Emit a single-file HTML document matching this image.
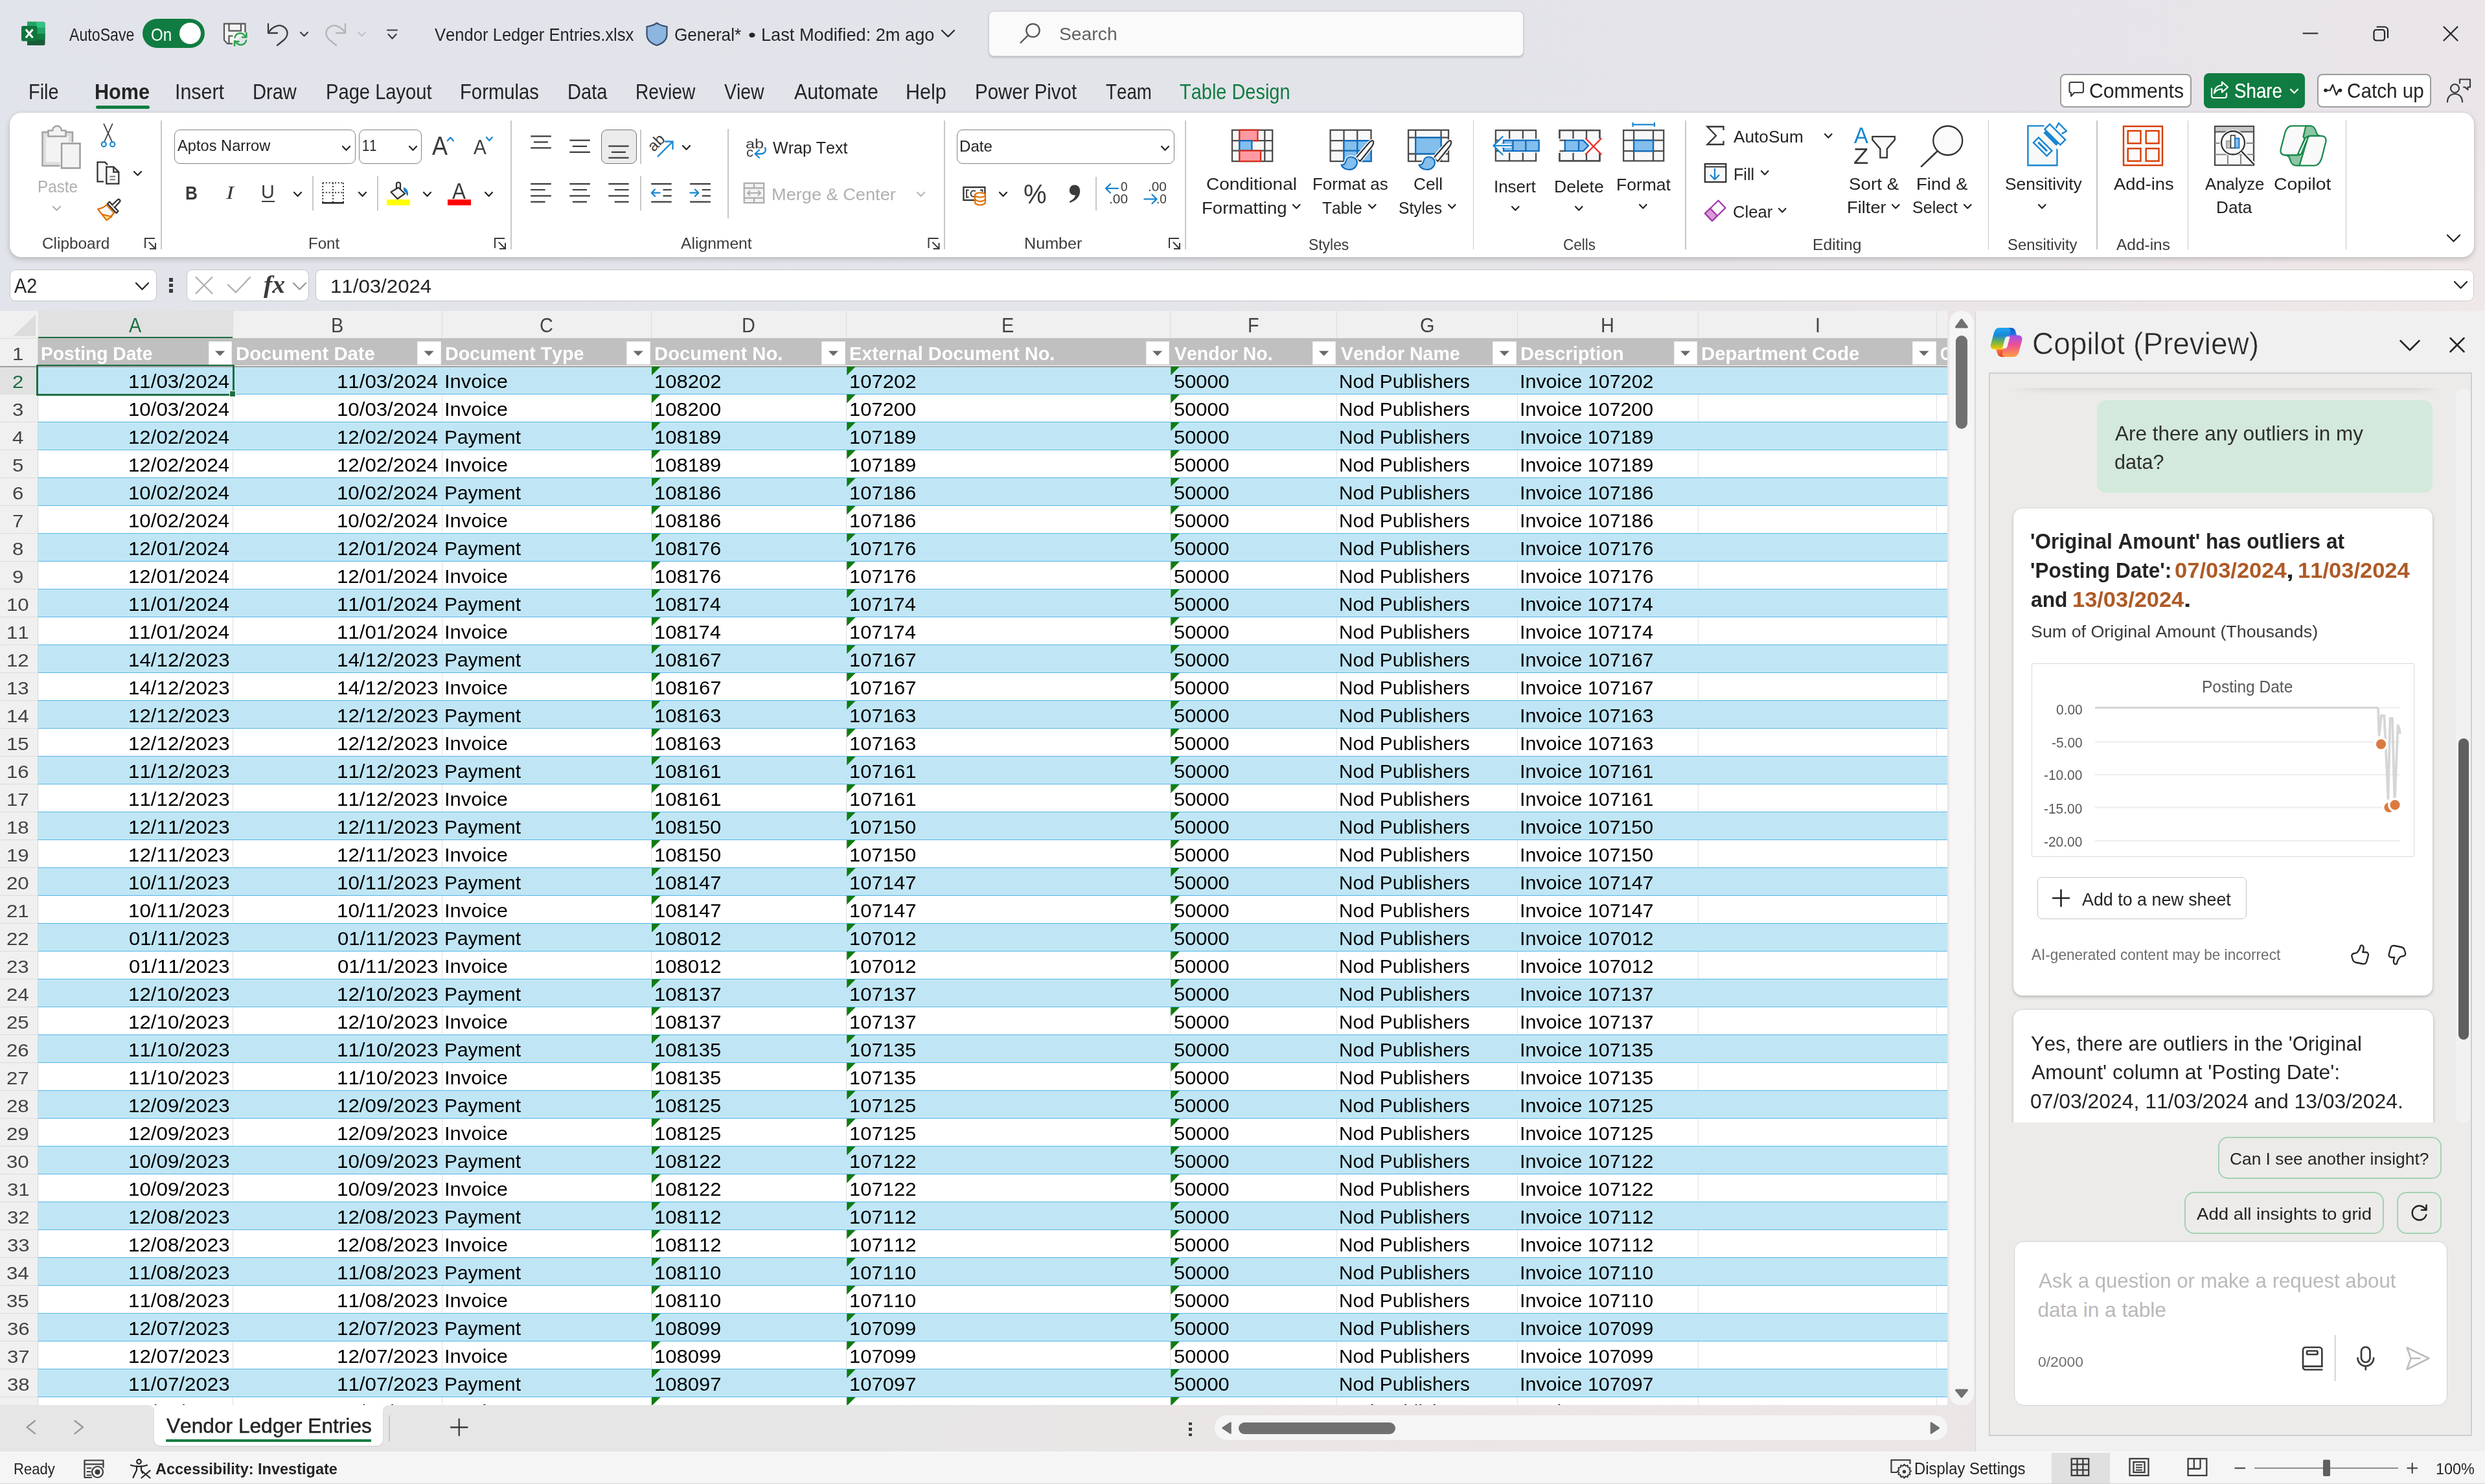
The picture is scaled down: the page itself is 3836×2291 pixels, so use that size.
<!DOCTYPE html><html><head><meta charset="utf-8"><title>Excel</title><style>
html,body{margin:0;padding:0}
body{width:3836px;height:2291px;overflow:hidden;position:relative;font-family:"Liberation Sans",sans-serif;
background:linear-gradient(90deg,#e1e4ea 0%,#e3e5ea 40%,#e8e5e9 70%,#efe8e8 100%);}
.t{position:absolute;white-space:nowrap;transform-origin:0 0;font-kerning:none;line-height:1;font-family:"Liberation Sans",sans-serif}
svg{overflow:visible}
</style></head><body>
<!-- part_top -->
<div style="position:absolute;left:0px;top:0px;width:3836px;height:300px;background:linear-gradient(180deg,rgba(0,0,0,0) 0%,rgba(0,0,0,0) 60%,rgba(0,0,0,0) 100%),linear-gradient(90deg,#e1e4ea 0%,#e2e4ea 40%,#e4e4ea 70%,#eae5e9 100%);-webkit-mask-image:linear-gradient(180deg,#000 70%,transparent);mask-image:linear-gradient(180deg,#000 70%,transparent)"></div>
<span class="t" style="left:106.54px;top:39.77px;font-size:27.20px;color:#242424;transform:scaleX(0.8518);">AutoSave</span>
<div style="position:absolute;left:220px;top:29px;width:96px;height:45px;background:#107c41;border-radius:23px"></div>
<span class="t" style="left:233.35px;top:39.77px;font-size:27.20px;color:#fff;transform:scaleX(0.8887);">On</span>
<div style="position:absolute;left:277px;top:35px;width:33px;height:33px;background:#fff;border-radius:50%"></div>
<svg style="position:absolute;left:462px;top:47.75px;" width="15" height="9.5" viewBox="0 0 15 9.5" fill="none"><path d="M2 2 L7.5 7.5 L13 2" stroke="#3b3b3b" stroke-width="2.2" stroke-linecap="round" stroke-linejoin="round"/></svg>
<svg style="position:absolute;left:551px;top:47.75px;" width="15" height="9.5" viewBox="0 0 15 9.5" fill="none"><path d="M2 2 L7.5 7.5 L13 2" stroke="#c4c4c4" stroke-width="2.2" stroke-linecap="round" stroke-linejoin="round"/></svg>
<span class="t" style="left:671.37px;top:39.80px;font-size:27.40px;color:#242424;transform:scaleX(0.9345);">Vendor Ledger Entries.xlsx</span>
<span class="t" style="left:1041.49px;top:39.80px;font-size:27.40px;color:#242424;transform:scaleX(0.9537);">General*</span>
<span class="t" style="left:1154.64px;top:39.80px;font-size:27.40px;color:#242424;transform:scaleX(1.2436);">•</span>
<span class="t" style="left:1174.76px;top:39.80px;font-size:27.40px;color:#242424;transform:scaleX(0.9921);">Last Modified: 2m ago</span>
<svg style="position:absolute;left:1452px;top:45.25px;" width="23" height="13.5" viewBox="0 0 23 13.5" fill="none"><path d="M2 2 L11.5 11.5 L21 2" stroke="#242424" stroke-width="2.2" stroke-linecap="round" stroke-linejoin="round"/></svg>
<div style="position:absolute;left:1526px;top:17px;width:826px;height:69.5px;background:#fafafa;border:1.5px solid #d2d2d6;border-radius:8px;box-sizing:border-box;box-shadow:0 1.5px 3px rgba(0,0,0,.18)"></div>
<span class="t" style="left:1635.23px;top:38.89px;font-size:28.00px;color:#616161;transform:scaleX(1.0104);">Search</span>
<span class="t" style="left:43.61px;top:126.08px;font-size:32.50px;color:#242424;transform:scaleX(0.8908);">File</span>
<span class="t" style="left:270.19px;top:126.08px;font-size:32.50px;color:#242424;transform:scaleX(0.9356);">Insert</span>
<span class="t" style="left:390.10px;top:126.08px;font-size:32.50px;color:#242424;transform:scaleX(0.8942);">Draw</span>
<span class="t" style="left:502.60px;top:126.08px;font-size:32.50px;color:#242424;transform:scaleX(0.8965);">Page Layout</span>
<span class="t" style="left:710.09px;top:126.08px;font-size:32.50px;color:#242424;transform:scaleX(0.9003);">Formulas</span>
<span class="t" style="left:876.10px;top:126.08px;font-size:32.50px;color:#242424;transform:scaleX(0.8948);">Data</span>
<span class="t" style="left:980.68px;top:126.08px;font-size:32.50px;color:#242424;transform:scaleX(0.8656);">Review</span>
<span class="t" style="left:1117.86px;top:126.08px;font-size:32.50px;color:#242424;transform:scaleX(0.8739);">View</span>
<span class="t" style="left:1225.92px;top:126.08px;font-size:32.50px;color:#242424;transform:scaleX(0.9338);">Automate</span>
<span class="t" style="left:1398.48px;top:126.08px;font-size:32.50px;color:#242424;transform:scaleX(0.9391);">Help</span>
<span class="t" style="left:1504.57px;top:126.08px;font-size:32.50px;color:#242424;transform:scaleX(0.9063);">Power Pivot</span>
<span class="t" style="left:1706.88px;top:126.08px;font-size:32.50px;color:#242424;transform:scaleX(0.8539);">Team</span>
<span class="t" style="left:145.93px;top:126.08px;font-size:32.50px;color:#242424;transform:scaleX(0.9424);font-weight:700;">Home</span>
<div style="position:absolute;left:147.5px;top:162.6px;width:83px;height:5px;background:#107c41;border-radius:3px"></div>
<span class="t" style="left:1821.35px;top:126.08px;font-size:32.50px;color:#107c41;transform:scaleX(0.8907);">Table Design</span>
<div style="position:absolute;left:3180px;top:113.5px;width:203px;height:52.5px;background:#fff;border:2px solid #9c9c9c;border-radius:8px;box-sizing:border-box"></div>
<span class="t" style="left:3224.99px;top:125.28px;font-size:30.50px;color:#242424;transform:scaleX(0.9906);">Comments</span>
<div style="position:absolute;left:3402px;top:113px;width:155.5px;height:53.5px;background:#107c41;border-radius:8px"></div>
<span class="t" style="left:3448.75px;top:125.28px;font-size:30.50px;color:#fff;transform:scaleX(0.9087);text-shadow:0 0 .6px #fff;">Share</span>
<svg style="position:absolute;left:3534px;top:135.75px;" width="15" height="9.5" viewBox="0 0 15 9.5" fill="none"><path d="M2 2 L7.5 7.5 L13 2" stroke="#fff" stroke-width="2.4" stroke-linecap="round" stroke-linejoin="round"/></svg>
<div style="position:absolute;left:3576.5px;top:113.5px;width:176.5px;height:52.5px;background:#fff;border:2px solid #9c9c9c;border-radius:8px;box-sizing:border-box"></div>
<span class="t" style="left:3622.52px;top:125.28px;font-size:30.50px;color:#242424;transform:scaleX(0.9724);">Catch up</span>
<svg style="position:absolute;left:0;top:0;pointer-events:none" width="3836" height="2291" fill="none"><g>
<path d="M42 33.700h25a2.500 2.500 0 0 1 2.500 2.500v31.300a2.500 2.500 0 0 1-2.500 2.500h-25z" fill="#185c37"/>
<path d="M42 33.700h25a2.500 2.500 0 0 1 2.500 2.500v6.700H42z" fill="#33c481"/><rect x="42" y="33.700" width="14" height="9.200" fill="#21a366"/>
<rect x="42" y="42.900" width="27.500" height="9.100" fill="#21a366"/><rect x="42" y="42.900" width="14" height="9.100" fill="#107c41"/>
<rect x="42" y="52" width="27.500" height="9.100" fill="#107c41"/><rect x="42" y="52" width="14" height="9.100" fill="#185c37"/>
<rect x="33" y="40" width="24.500" height="23.600" rx="2.500" fill="#107c41"/><rect x="33" y="40" width="24.500" height="23.600" rx="2.500" fill="#000" opacity=".05"/>
<path d="M39.800 45.500l10.800 12.800M50.600 45.500l-10.800 12.800" stroke="#fff" stroke-width="3.100"/></g>
<g stroke="#555" stroke-width="2.200" fill="#f4f4f4" stroke-linejoin="miter"><path d="M359 67.400h-8l-5-5.500V36.700h32.500V50"/><path d="M353.500 36.700v11h18.500v-11" fill="none"/><path d="M353.500 67v-11.500h6" fill="none"/></g>
<g stroke="#2ea44f" stroke-width="2.500" fill="none" stroke-linecap="round" stroke-linejoin="round"><path d="M362.500 58a8.500 8.500 0 0 1 15-3.500l2.500 3M380.500 51v6.500h-6.500"/><path d="M380 62.500a8.500 8.500 0 0 1-15 3.500l-2.500-3M362 70.500v-6.500h6.500"/></g>
<g stroke="#3b3b3b" stroke-width="2.3" fill="none" stroke-linecap="round" stroke-linejoin="round">
<path d="M414 37v14h14"/><path d="M414.500 50.500C420 41 431 36.500 438 41.500s7.500 13 1 19.500L428 70"/></g>
<g stroke="#b4b4b4" stroke-width="2.3" fill="none" stroke-linecap="round" stroke-linejoin="round">
<path d="M533 37v14h-14"/><path d="M532.500 50.500C527 41 516 36.500 509 41.500s-7.500 13-1 19.500L519 70"/></g>
<g stroke="#3b3b3b" stroke-width="2.2" stroke-linecap="round" stroke-linejoin="round" fill="none"><path d="M598 46.500h15"/><path d="M599.500 53l6 6.500l6-6.500"/></g>
<path d="M1014 35.500c5 3.500 10 5 15.500 5.500v12c0 9-6 14-15.500 17c-9.500-3-15.500-8-15.500-17V41c5.500-.5 10.500-2 15.500-5.500z" fill="#8cb6e0" stroke="#39506b" stroke-width="2.200" stroke-linejoin="round"/>
<g stroke="#555" stroke-width="2.3" fill="none" stroke-linecap="round"><circle cx="1594.500" cy="47" r="10.200"/><path d="M1587 54.500L1575.500 66"/></g>
<g stroke="#242424" stroke-width="2.200" fill="none" stroke-linecap="round" stroke-linejoin="round"><path d="M3555.500 51.500h22"/>
<rect x="3664.500" y="46" width="16.500" height="16.500" rx="3.500"/><path d="M3669.500 41.500h11.500a5 5 0 0 1 5 5V58"/>
<path d="M3772.500 41.500l21 21M3793.500 41.500l-21 21"/></g>
<path d="M3194.500 129.500a2.500 2.500 0 0 1 2.500-2.500h16.500a2.500 2.500 0 0 1 2.500 2.500v11a2.500 2.500 0 0 1-2.500 2.500h-11.500l-5 5.500v-5.500h0a2.500 2.500 0 0 1-2.500-2.500z" stroke="#3b3b3b" stroke-width="2.100" fill="none" stroke-linejoin="round"/>
<g stroke="#fff" stroke-width="2.200" fill="none" stroke-linecap="round" stroke-linejoin="round"><path d="M3414 136.500v11.500a3 3 0 0 0 3 3h17a3 3 0 0 0 3-3v-4"/><path d="M3430 126.500l9 8l-9 8v-5c-6 0-9.500 2-12 6.500c.5-7 4-12 12-12.500z"/></g>
<g stroke="#242424" stroke-width="2.200" fill="none" stroke-linecap="round" stroke-linejoin="round"><path d="M3592.500 139.500h4.500l4-8.500l5.500 15.500l3.500-7h1.500"/></g><circle cx="3590" cy="139.500" r="2.800" fill="#242424"/><circle cx="3612.500" cy="139.500" r="2.800" fill="#242424"/>
<g stroke="#3b3b3b" stroke-width="2.200" fill="none" stroke-linecap="round" stroke-linejoin="round"><circle cx="3789.500" cy="136.500" r="6.500"/><path d="M3778 157.500c0-8 5-12.500 11.500-12.500s11.500 4.500 11.500 12.500"/>
<path d="M3797 128.500v-6h16v12h-3.500v4l-4.500-4h-2"/></g></svg>
<!-- part_ribbon -->
<div style="position:absolute;left:15px;top:174px;width:3804px;height:223px;background:#fff;border-radius:18px;box-shadow:0 3px 9px rgba(0,0,0,.20),0 0 2px rgba(0,0,0,.10)"></div>
<div style="position:absolute;left:248.2px;top:185.5px;width:1.6px;height:199px;background:#c8c8c8"></div>
<div style="position:absolute;left:788.2px;top:185.5px;width:1.6px;height:199px;background:#c8c8c8"></div>
<div style="position:absolute;left:1457.2px;top:185.5px;width:1.6px;height:199px;background:#c8c8c8"></div>
<div style="position:absolute;left:1829.2px;top:185.5px;width:1.6px;height:199px;background:#c8c8c8"></div>
<div style="position:absolute;left:2273.6px;top:185.5px;width:1.6px;height:199px;background:#c8c8c8"></div>
<div style="position:absolute;left:2601.2px;top:185.5px;width:1.6px;height:199px;background:#c8c8c8"></div>
<div style="position:absolute;left:3068.7px;top:185.5px;width:1.6px;height:199px;background:#c8c8c8"></div>
<div style="position:absolute;left:3236.2px;top:185.5px;width:1.6px;height:199px;background:#c8c8c8"></div>
<div style="position:absolute;left:3376.8px;top:185.5px;width:1.6px;height:199px;background:#c8c8c8"></div>
<div style="position:absolute;left:3620.7px;top:185.5px;width:1.6px;height:199px;background:#c8c8c8"></div>
<span class="t" style="left:65.18px;top:363.91px;font-size:24.20px;color:#3b3b3b;transform:scaleX(1.0076);">Clipboard</span>
<span class="t" style="left:476.01px;top:363.91px;font-size:24.20px;color:#3b3b3b;transform:scaleX(0.9948);">Font</span>
<span class="t" style="left:1050.94px;top:363.91px;font-size:24.20px;color:#3b3b3b;transform:scaleX(1.0199);">Alignment</span>
<span class="t" style="left:1580.92px;top:363.91px;font-size:24.20px;color:#3b3b3b;transform:scaleX(1.0394);">Number</span>
<span class="t" style="left:2019.97px;top:366.01px;font-size:24.20px;color:#3b3b3b;transform:scaleX(0.9458);">Styles</span>
<span class="t" style="left:2412.88px;top:366.01px;font-size:24.20px;color:#3b3b3b;transform:scaleX(0.9278);">Cells</span>
<span class="t" style="left:2797.96px;top:366.01px;font-size:24.20px;color:#3b3b3b;transform:scaleX(1.0219);">Editing</span>
<span class="t" style="left:3098.53px;top:366.01px;font-size:24.20px;color:#3b3b3b;transform:scaleX(0.9871);">Sensitivity</span>
<span class="t" style="left:3266.54px;top:366.01px;font-size:24.20px;color:#3b3b3b;transform:scaleX(1.0105);">Add-ins</span>
<span class="t" style="left:58.00px;top:275.69px;font-size:25.40px;color:#b0b0b0;transform:scaleX(0.9555);">Paste</span>
<svg style="position:absolute;left:80.3px;top:317.05px;" width="15" height="9.5" viewBox="0 0 15 9.5" fill="none"><path d="M2 2 L7.5 7.5 L13 2" stroke="#b0b0b0" stroke-width="2.2" stroke-linecap="round" stroke-linejoin="round"/></svg>
<svg style="position:absolute;left:204.5px;top:263.05px;" width="15" height="9.5" viewBox="0 0 15 9.5" fill="none"><path d="M2 2 L7.5 7.5 L13 2" stroke="#242424" stroke-width="2.2" stroke-linecap="round" stroke-linejoin="round"/></svg>
<div style="position:absolute;left:268.5px;top:200.2px;width:280px;height:53.2px;border:1.9px solid #828282;border-radius:9px;box-sizing:border-box;background:#fff"></div>
<span class="t" style="left:273.94px;top:213.47px;font-size:24.60px;color:#242424;transform:scaleX(0.9622);">Aptos Narrow</span>
<svg style="position:absolute;left:527.3px;top:224.3px;" width="15" height="9.8" viewBox="0 0 15 9.8" fill="none"><path d="M2 2 L7.5 7.8 L13 2" stroke="#242424" stroke-width="2.2" stroke-linecap="round" stroke-linejoin="round"/></svg>
<div style="position:absolute;left:553.9px;top:200.2px;width:97.2px;height:53.2px;border:1.9px solid #828282;border-radius:9px;box-sizing:border-box;background:#fff"></div>
<span class="t" style="left:559.19px;top:213.47px;font-size:24.60px;color:#242424;transform:scaleX(0.8182);">11</span>
<svg style="position:absolute;left:630.3px;top:224.3px;" width="15" height="9.8" viewBox="0 0 15 9.8" fill="none"><path d="M2 2 L7.5 7.8 L13 2" stroke="#242424" stroke-width="2.2" stroke-linecap="round" stroke-linejoin="round"/></svg>
<span class="t" style="left:667.31px;top:204.73px;font-size:40.00px;color:#3b3b3b;transform:scaleX(0.8981);">A</span>
<span class="t" style="left:730.83px;top:212.35px;font-size:31.00px;color:#3b3b3b;transform:scaleX(0.9544);">A</span>
<span class="t" style="left:285.93px;top:282.52px;font-size:29.50px;color:#3b3b3b;transform:scaleX(0.8891);font-weight:700;">B</span>
<span class="t" style="left:348.59px;top:282.10px;font-size:30.00px;color:#3b3b3b;transform:scaleX(1.2000);font-style:italic;font-family:'Liberation Serif',serif;">I</span>
<span class="t" style="left:403.47px;top:282.25px;font-size:29.00px;color:#3b3b3b;transform:scaleX(0.9904);">U</span>
<div style="position:absolute;left:404px;top:310px;width:19.8px;height:2.2px;background:#3b3b3b"></div>
<svg style="position:absolute;left:452.1px;top:294.5px;" width="15" height="9.8" viewBox="0 0 15 9.8" fill="none"><path d="M2 2 L7.5 7.8 L13 2" stroke="#242424" stroke-width="2.2" stroke-linecap="round" stroke-linejoin="round"/></svg>
<div style="position:absolute;left:482.2px;top:272px;width:1.5px;height:53.4px;background:#c8c8c8"></div>
<div style="position:absolute;left:582.4px;top:272px;width:1.5px;height:53.4px;background:#c8c8c8"></div>
<svg style="position:absolute;left:552.4px;top:294.5px;" width="15" height="9.8" viewBox="0 0 15 9.8" fill="none"><path d="M2 2 L7.5 7.8 L13 2" stroke="#242424" stroke-width="2.2" stroke-linecap="round" stroke-linejoin="round"/></svg>
<div style="position:absolute;left:597px;top:307.9px;width:35.8px;height:9px;background:#ffff00"></div>
<svg style="position:absolute;left:652.2px;top:294.5px;" width="15" height="9.8" viewBox="0 0 15 9.8" fill="none"><path d="M2 2 L7.5 7.8 L13 2" stroke="#242424" stroke-width="2.2" stroke-linecap="round" stroke-linejoin="round"/></svg>
<span class="t" style="left:698.22px;top:276.77px;font-size:35.00px;color:#3b3b3b;transform:scaleX(0.9013);">A</span>
<div style="position:absolute;left:690.8px;top:307.9px;width:36.3px;height:9px;background:#ff0000"></div>
<svg style="position:absolute;left:746.5px;top:294.5px;" width="15" height="9.8" viewBox="0 0 15 9.8" fill="none"><path d="M2 2 L7.5 7.8 L13 2" stroke="#242424" stroke-width="2.2" stroke-linecap="round" stroke-linejoin="round"/></svg>
<div style="position:absolute;left:928.4px;top:200.2px;width:55px;height:53.2px;background:#ebebeb;border:1.9px solid #757575;border-radius:9px;box-sizing:border-box"></div>
<div style="position:absolute;left:988px;top:200.2px;width:1.5px;height:53.2px;background:#c8c8c8"></div>
<div style="position:absolute;left:988px;top:272px;width:1.5px;height:53.4px;background:#c8c8c8"></div>
<div style="position:absolute;left:1123.4px;top:198.5px;width:1.6px;height:138.5px;background:#c8c8c8"></div>
<span class="t" style="left:994.5px;top:220.5px;font-size:24px;color:#3b3b3b;transform:rotate(-45deg);transform-origin:0 0">ab</span>
<svg style="position:absolute;left:1052.2px;top:223px;" width="15" height="9.8" viewBox="0 0 15 9.8" fill="none"><path d="M2 2 L7.5 7.8 L13 2" stroke="#242424" stroke-width="2.2" stroke-linecap="round" stroke-linejoin="round"/></svg>
<span class="t" style="left:1151.43px;top:212.04px;font-size:20.50px;color:#3b3b3b;transform:scaleX(1.2329);">ab</span>
<span class="t" style="left:1152.06px;top:225.04px;font-size:20.50px;color:#3b3b3b;transform:scaleX(1.0777);">c</span>
<span class="t" style="left:1193.37px;top:216.39px;font-size:25.40px;color:#242424;transform:scaleX(0.9862);">Wrap Text</span>
<span class="t" style="left:1191.26px;top:287.79px;font-size:25.40px;color:#b0b0b0;transform:scaleX(1.0701);">Merge &amp; Center</span>
<svg style="position:absolute;left:1413.5px;top:294.5px;" width="15" height="9.8" viewBox="0 0 15 9.8" fill="none"><path d="M2 2 L7.5 7.8 L13 2" stroke="#b8b8b8" stroke-width="2.2" stroke-linecap="round" stroke-linejoin="round"/></svg>
<div style="position:absolute;left:1477.1px;top:200.3px;width:335.7px;height:53px;border:1.9px solid #828282;border-radius:9px;box-sizing:border-box;background:#fff"></div>
<span class="t" style="left:1481.21px;top:213.77px;font-size:24.60px;color:#242424;transform:scaleX(0.9803);">Date</span>
<svg style="position:absolute;left:1791.2px;top:224.3px;" width="15" height="9.8" viewBox="0 0 15 9.8" fill="none"><path d="M2 2 L7.5 7.8 L13 2" stroke="#242424" stroke-width="2.2" stroke-linecap="round" stroke-linejoin="round"/></svg>
<svg style="position:absolute;left:1541.2px;top:295px;" width="15" height="9.8" viewBox="0 0 15 9.8" fill="none"><path d="M2 2 L7.5 7.8 L13 2" stroke="#242424" stroke-width="2.2" stroke-linecap="round" stroke-linejoin="round"/></svg>
<span class="t" style="left:1580.20px;top:277.69px;font-size:43.00px;color:#3b3b3b;transform:scaleX(0.9331);">%</span>
<div style="position:absolute;left:1691.4px;top:272.6px;width:1.5px;height:52.8px;background:#c8c8c8"></div>
<span class="t" style="left:1729.94px;top:279.39px;font-size:19.50px;color:#3b3b3b;transform:scaleX(0.9773);">0</span>
<span class="t" style="left:1711.57px;top:298.49px;font-size:19.50px;color:#3b3b3b;transform:scaleX(1.0712);">.00</span>
<span class="t" style="left:1771.78px;top:279.39px;font-size:19.50px;color:#3b3b3b;transform:scaleX(1.0631);">.00</span>
<span class="t" style="left:1784.75px;top:298.49px;font-size:19.50px;color:#3b3b3b;transform:scaleX(0.9704);">.0</span>
<svg style="position:absolute;left:0;top:0;pointer-events:none" width="3836" height="2291" fill="none"><g stroke="#3b3b3b" stroke-width="2" fill="none" stroke-linecap="square"><path d="M224 382V368H238"/><path d="M230.5 374.5L240 384M240 376v8h-8"/></g>
<g stroke="#3b3b3b" stroke-width="2" fill="none" stroke-linecap="square"><path d="M764 382V368H778"/><path d="M770.5 374.5L780 384M780 376v8h-8"/></g>
<g stroke="#3b3b3b" stroke-width="2" fill="none" stroke-linecap="square"><path d="M1433.5 382V368H1447.5"/><path d="M1440.0 374.5L1449.5 384M1449.5 376v8h-8"/></g>
<g stroke="#3b3b3b" stroke-width="2" fill="none" stroke-linecap="square"><path d="M1805 382V368H1819"/><path d="M1811.5 374.5L1821 384M1821 376v8h-8"/></g>
<g><path d="M65.500 204h46.500v52H65.500z" fill="#dedede" stroke="#a3a3a3" stroke-width="2.500"/><rect x="71" y="210" width="35" height="40" fill="#f3f3f3"/>
<path d="M74.500 210.500v-9h6.500a7 7 0 0 1 14 0h6.500v9z" fill="#f3f3f3" stroke="#a3a3a3" stroke-width="2.500"/>
<rect x="92.500" y="219.500" width="33.500" height="42.500" fill="#fff"/><rect x="95" y="221.500" width="28.500" height="38" fill="#f3f3f3" stroke="#9c9c9c" stroke-width="2.500"/></g>
<g stroke="#3b3b3b" stroke-width="1.800" stroke-linecap="round"><path d="M160.400 191.500L172.500 218M173.500 191.500L161.400 218"/></g>
<g stroke="#1a86d0" stroke-width="2.200" fill="none"><circle cx="160.300" cy="222.700" r="3.600"/><circle cx="173.700" cy="222.700" r="3.600"/></g>
<g stroke="#333" stroke-width="2.300" fill="#fafafa" stroke-linejoin="miter"><path d="M160 280.300H150.500V250.400h11.500l4 4"/><path d="M164.300 257.600h11l8 8v18h-19z"/><path d="M175.300 257.600v8h8" fill="none"/></g>
<g stroke="#7a7a7a" stroke-width="2"><path d="M169.500 272.600h8.500M169.500 277.300h8.500"/></g>
<g stroke-linejoin="round"><path d="M151 322.800c6-1 10.500-3.500 13.500-6.500l11.500 12.500c-3 4-7 8-11.700 10.800z" fill="#fafafa" stroke="#e07000" stroke-width="2.300"/>
<path d="M158 331l14.500 3.500l-8 5.300z" fill="#ffe08a" stroke="#e07000" stroke-width="2"/>
<path d="M166 314.500l3-3l13.500 14.500l-3 3z" fill="#fff" stroke="#333" stroke-width="2.300"/><path d="M173 316.500l8.500-8a2.200 2.200 0 0 1 3.200 3.200l-8 8.500" fill="#fff" stroke="#333" stroke-width="2.300"/></g>
<g stroke="#1a86d0" stroke-width="2.300" fill="none" stroke-linecap="round" stroke-linejoin="round"><path d="M690.800 217.300l4.500-5l4.500 5"/><path d="M750.800 212l4.500 5l4.500-5"/></g>
<g stroke="#333" stroke-width="2" stroke-dasharray="2 2.700"><path d="M498.200 282.300h32M498.200 282.300v30M530 282.300v30M514 282.300v30M498.200 297.300h32"/></g><path d="M497.200 313.300h33.700" stroke="#222" stroke-width="2.400"/>
<g stroke="#333" stroke-width="2.200" fill="#fafafa" stroke-linejoin="round"><path d="M615 289.500l10 9.500l-11.500 8l-10-10.500z"/><path d="M612 292v-7.500a3 3 0 0 1 6 0v7.500" fill="none"/></g>
<path d="M623.500 290c4 1.500 6.500 5.500 5.500 12c-1-3.500-2.500-6-5-7.500z" fill="#1a86d0" stroke="#0f6cbd" stroke-width="1.200"/>
<path d="M819.2 210.3H850.8M823.9 219.3H845.9M819.2 228.4H850.8" stroke="#3b3b3b" stroke-width="2.200"/>
<path d="M879.3 216.7H910.9M883.8 225.8H906M879.3 234.8H910.9" stroke="#3b3b3b" stroke-width="2.200"/>
<path d="M939.3 225.6H970.6M944 234.8H965.9M939.3 243.7H970.6" stroke="#3b3b3b" stroke-width="2.200"/>
<g stroke="#1a86d0" stroke-width="2.300" fill="none" stroke-linecap="round" stroke-linejoin="round"><path d="M1015.500 241.500L1038 219M1027 218.500h11.500v11.500"/></g>
<g stroke="#1a86d0" stroke-width="2.300" fill="none" stroke-linecap="round" stroke-linejoin="round"><path d="M1181 228c2.500 6-2 9.500-6.500 9.500h-8.500M1172 231.500l-6.500 6l6.500 6"/></g>
<path d="M819.2 283.8H850.8M819.2 293H841.6M819.2 302.4H850.8M819.2 311.6H841.6" stroke="#3b3b3b" stroke-width="2.200"/>
<path d="M879.3 283.8H910.9M883.8 293H906M879.3 302.4H910.9M883.8 311.6H906" stroke="#3b3b3b" stroke-width="2.200"/>
<path d="M939.3 283.8H970.6M948.7 293H970.6M939.3 302.4H970.6M948.7 311.6H970.6" stroke="#3b3b3b" stroke-width="2.200"/>
<path d="M1005.200 283.800H1036.700M1005.200 311.600H1036.700M1023.500 293H1036.700M1023.500 302.400H1036.700" stroke="#3b3b3b" stroke-width="2.200"/><g stroke="#1a86d0" stroke-width="2.300" fill="none" stroke-linecap="round" stroke-linejoin="round"><path d="M1006 297.700h12.500M1011 292.500l-5.200 5.200l5.200 5.200"/></g>
<path d="M1065.100 283.800H1096.900M1065.100 311.600H1096.900M1083.700 293H1096.900M1083.700 302.400H1096.900" stroke="#3b3b3b" stroke-width="2.200"/><g stroke="#1a86d0" stroke-width="2.300" fill="none" stroke-linecap="round" stroke-linejoin="round"><path d="M1065.500 297.700h12.500M1073 292.500l5.200 5.200l-5.200 5.200"/></g>
<g stroke="#ababab" stroke-width="2.200" fill="#f3f3f3"><rect x="1148.700" y="282.800" width="30.500" height="30.300"/><path d="M1148.700 290.300h30.500M1148.700 305.600h30.500M1164 282.800v7.500M1164 305.600v7.500" fill="none"/></g>
<g stroke="#ababab" stroke-width="2" fill="none" stroke-linecap="round" stroke-linejoin="round"><path d="M1154 298h20M1157.500 294.500l-3.500 3.500l3.500 3.500M1170.500 294.500l3.500 3.500l-3.500 3.500"/></g>
<g stroke="#333" stroke-width="2.300" fill="#fafafa"><rect x="1487.400" y="289" width="33" height="20"/></g>
<g stroke="#333" stroke-width="1.800" fill="none"><path d="M1495.500 293.500h-3.500v11h3.500M1506 295c-5-2-7.500 1-7.500 4s2.500 6 7.500 4M1513 293.500h3.500v3"/></g>
<g stroke="#e07000" stroke-width="2.200" fill="#fafafa"><path d="M1505 301v11.500c0 2.200 3.600 4 8 4s8-1.800 8-4V301"/><ellipse cx="1513" cy="301" rx="8" ry="3.500"/><path d="M1505 306.800c0 2.200 3.600 4 8 4s8-1.800 8-4" fill="none"/></g>
<path d="M1659 285.500c5 0 8.200 3.800 8.200 9.500c0 8-5.500 14.500-15.500 18l-.8-2.200c5.500-2.500 8.500-5.500 9-9.500c-5 .5-9-2.500-9-7.500c0-4.800 3.500-8.300 8.100-8.300z" fill="#3b3b3b"/>
<g stroke="#1a86d0" stroke-width="2.300" fill="none" stroke-linecap="round" stroke-linejoin="round"><path d="M1707 290.900h19M1714 284l-7 6.900l7 6.900"/><path d="M1766.500 307.400h18.500M1778.500 300.500l7 6.900l-7 6.900"/></g></svg>
<!-- part_ribbon2 -->
<span class="t" style="left:1862.40px;top:272.39px;font-size:25.40px;color:#242424;transform:scaleX(1.1014);">Conditional</span>
<span class="t" style="left:1854.73px;top:308.69px;font-size:25.40px;color:#242424;transform:scaleX(1.0842);">Formatting</span>
<svg style="position:absolute;left:1993.75px;top:314.45px;" width="14.5" height="9.5" viewBox="0 0 14.5 9.5" fill="none"><path d="M2 2 L7.25 7.5 L12.5 2" stroke="#242424" stroke-width="2.2" stroke-linecap="round" stroke-linejoin="round"/></svg>
<span class="t" style="left:2026.36px;top:272.39px;font-size:25.40px;color:#242424;transform:scaleX(1.0212);">Format as</span>
<span class="t" style="left:2041.25px;top:308.69px;font-size:25.40px;color:#242424;transform:scaleX(0.9699);">Table</span>
<svg style="position:absolute;left:2110.75px;top:314.45px;" width="14.5" height="9.5" viewBox="0 0 14.5 9.5" fill="none"><path d="M2 2 L7.25 7.5 L12.5 2" stroke="#242424" stroke-width="2.2" stroke-linecap="round" stroke-linejoin="round"/></svg>
<span class="t" style="left:2181.59px;top:272.39px;font-size:25.40px;color:#242424;transform:scaleX(1.0323);">Cell</span>
<span class="t" style="left:2158.79px;top:308.69px;font-size:25.40px;color:#242424;transform:scaleX(0.9697);">Styles</span>
<svg style="position:absolute;left:2234.25px;top:314.45px;" width="14.5" height="9.5" viewBox="0 0 14.5 9.5" fill="none"><path d="M2 2 L7.25 7.5 L12.5 2" stroke="#242424" stroke-width="2.2" stroke-linecap="round" stroke-linejoin="round"/></svg>
<span class="t" style="left:2306.40px;top:275.59px;font-size:25.40px;color:#242424;transform:scaleX(1.0200);">Insert</span>
<svg style="position:absolute;left:2331.75px;top:316.95px;" width="14.5" height="9.5" viewBox="0 0 14.5 9.5" fill="none"><path d="M2 2 L7.25 7.5 L12.5 2" stroke="#242424" stroke-width="2.2" stroke-linecap="round" stroke-linejoin="round"/></svg>
<span class="t" style="left:2399.01px;top:275.59px;font-size:25.40px;color:#242424;transform:scaleX(1.0453);">Delete</span>
<svg style="position:absolute;left:2429.55px;top:316.95px;" width="14.5" height="9.5" viewBox="0 0 14.5 9.5" fill="none"><path d="M2 2 L7.25 7.5 L12.5 2" stroke="#242424" stroke-width="2.2" stroke-linecap="round" stroke-linejoin="round"/></svg>
<span class="t" style="left:2494.91px;top:272.59px;font-size:25.40px;color:#242424;transform:scaleX(1.0429);">Format</span>
<svg style="position:absolute;left:2528.55px;top:313.95px;" width="14.5" height="9.5" viewBox="0 0 14.5 9.5" fill="none"><path d="M2 2 L7.25 7.5 L12.5 2" stroke="#242424" stroke-width="2.2" stroke-linecap="round" stroke-linejoin="round"/></svg>
<span class="t" style="left:2676.43px;top:199.19px;font-size:25.40px;color:#242424;transform:scaleX(1.0316);">AutoSum</span>
<svg style="position:absolute;left:2814.55px;top:205.05px;" width="14.5" height="9.5" viewBox="0 0 14.5 9.5" fill="none"><path d="M2 2 L7.25 7.5 L12.5 2" stroke="#242424" stroke-width="2.2" stroke-linecap="round" stroke-linejoin="round"/></svg>
<span class="t" style="left:2675.53px;top:256.59px;font-size:25.40px;color:#242424;transform:scaleX(0.9880);">Fill</span>
<svg style="position:absolute;left:2716.65px;top:262.35px;" width="14.5" height="9.5" viewBox="0 0 14.5 9.5" fill="none"><path d="M2 2 L7.25 7.5 L12.5 2" stroke="#242424" stroke-width="2.2" stroke-linecap="round" stroke-linejoin="round"/></svg>
<span class="t" style="left:2675.22px;top:314.59px;font-size:25.40px;color:#242424;transform:scaleX(1.0096);">Clear</span>
<svg style="position:absolute;left:2743.95px;top:320.45px;" width="14.5" height="9.5" viewBox="0 0 14.5 9.5" fill="none"><path d="M2 2 L7.25 7.5 L12.5 2" stroke="#242424" stroke-width="2.2" stroke-linecap="round" stroke-linejoin="round"/></svg>
<span class="t" style="left:2862.42px;top:192.44px;font-size:35.50px;color:#1a86d0;transform:scaleX(0.9312);">A</span>
<span class="t" style="left:2861.25px;top:223.94px;font-size:35.50px;color:#3b3b3b;transform:scaleX(1.0805);">Z</span>
<span class="t" style="left:2854.25px;top:272.39px;font-size:25.40px;color:#242424;transform:scaleX(1.0945);">Sort &amp;</span>
<span class="t" style="left:2851.25px;top:308.19px;font-size:25.40px;color:#242424;transform:scaleX(1.0749);">Filter</span>
<svg style="position:absolute;left:2919.25px;top:314.05px;" width="14.5" height="9.5" viewBox="0 0 14.5 9.5" fill="none"><path d="M2 2 L7.25 7.5 L12.5 2" stroke="#242424" stroke-width="2.2" stroke-linecap="round" stroke-linejoin="round"/></svg>
<span class="t" style="left:2957.83px;top:272.39px;font-size:25.40px;color:#242424;transform:scaleX(1.0839);">Find &amp;</span>
<span class="t" style="left:2952.17px;top:308.19px;font-size:25.40px;color:#242424;transform:scaleX(0.9906);">Select</span>
<svg style="position:absolute;left:3029.65px;top:314.05px;" width="14.5" height="9.5" viewBox="0 0 14.5 9.5" fill="none"><path d="M2 2 L7.25 7.5 L12.5 2" stroke="#242424" stroke-width="2.2" stroke-linecap="round" stroke-linejoin="round"/></svg>
<span class="t" style="left:3094.71px;top:272.39px;font-size:25.40px;color:#242424;transform:scaleX(1.0386);">Sensitivity</span>
<svg style="position:absolute;left:3145.35px;top:314.05px;" width="14.5" height="9.5" viewBox="0 0 14.5 9.5" fill="none"><path d="M2 2 L7.25 7.5 L12.5 2" stroke="#242424" stroke-width="2.2" stroke-linecap="round" stroke-linejoin="round"/></svg>
<span class="t" style="left:3262.63px;top:272.39px;font-size:25.40px;color:#242424;transform:scaleX(1.0767);">Add-ins</span>
<span class="t" style="left:3403.94px;top:272.39px;font-size:25.40px;color:#242424;transform:scaleX(1.0113);">Analyze</span>
<span class="t" style="left:3420.54px;top:308.19px;font-size:25.40px;color:#242424;transform:scaleX(1.0305);">Data</span>
<span class="t" style="left:3510.48px;top:272.39px;font-size:25.40px;color:#242424;transform:scaleX(1.1199);">Copilot</span>
<svg style="position:absolute;left:3775.7px;top:360.75px;" width="23" height="13.5" viewBox="0 0 23 13.5" fill="none"><path d="M2 2 L11.5 11.5 L21 2" stroke="#242424" stroke-width="2.3" stroke-linecap="round" stroke-linejoin="round"/></svg>
<svg style="position:absolute;left:0;top:0;pointer-events:none" width="3836" height="2291" fill="none"><rect x="1902" y="200.8" width="62.2" height="48.2" fill="#f8f8f8" stroke="#4d4b49" stroke-width="2.300"/><path d="M1913.4 200.8V249M1952.3 200.8V249M1902 217.2H1964.2M1902 232.6H1964.2" stroke="#4d4b49" stroke-width="2.300"/>
<rect x="1913.400" y="200.800" width="28" height="16.400" fill="#ff9aa2" stroke="#d92c1c" stroke-width="2.300"/><rect x="1913.400" y="217.200" width="19" height="15.400" fill="#83beec" stroke="#0f6cbd" stroke-width="2.300"/><rect x="1913.400" y="232.600" width="32.700" height="16.400" fill="#ff9aa2" stroke="#d92c1c" stroke-width="2.300"/>
<rect x="2053.6" y="200.8" width="62.9" height="48.2" fill="#f8f8f8" stroke="#4d4b49" stroke-width="2.300"/><path d="M2074.5 200.8V249M2095.2 200.8V249M2053.6 217.2H2116.5M2053.6 232.6H2116.5" stroke="#4d4b49" stroke-width="2.300"/>
<rect x="2074.500" y="217.200" width="42" height="31.800" fill="#83beec" stroke="#0f6cbd" stroke-width="2.300"/><path d="M2095.200 217.200V249M2074.500 232.600H2116.500" stroke="#0f6cbd" stroke-width="2.300"/>
<path d="M2119.5 217.5c1.500 1.500 .500 5-2 9l-18 22.500l-6.500-5l19-22c3-3.500 6-5.500 7.500-4.500z" fill="#fff" stroke="#fff" stroke-width="5"/>
<path d="M2119.5 217.5c1.500 1.500 .500 5-2 9l-18 22.500l-6.500-5l19-22c3-3.500 6-5.500 7.500-4.500z" fill="#fafafa" stroke="#333" stroke-width="2.200" stroke-linejoin="round"/>
<path d="M2070.5 254.5c4 .500 6-1.500 7-5.500c1-5 5-7.500 10-6.500c5.500 1 8.500 6 7 11c-2 7-9 9.500-15 8c-4-1-7.500-3.500-9-7z" fill="#83beec" stroke="#fff" stroke-width="5"/>
<path d="M2070.5 254.5c4 .500 6-1.500 7-5.500c1-5 5-7.500 10-6.500c5.500 1 8.500 6 7 11c-2 7-9 9.500-15 8c-4-1-7.500-3.500-9-7z" fill="#83beec" stroke="#0f6cbd" stroke-width="2.200" stroke-linejoin="round"/>
<rect x="2174" y="200.8" width="62" height="48.2" fill="#f8f8f8" stroke="#4d4b49" stroke-width="2.300"/><path d="M2185.2 200.8V249M2224.5 200.8V249M2174 212.4H2236M2174 237.5H2236" stroke="#4d4b49" stroke-width="2.300"/>
<rect x="2185.200" y="212.400" width="39.300" height="25.100" fill="#83beec" stroke="#0f6cbd" stroke-width="2.300"/>
<path d="M2239.5 217.5c1.500 1.500 .500 5-2 9l-18 22.500l-6.500-5l19-22c3-3.500 6-5.500 7.500-4.500z" fill="#fff" stroke="#fff" stroke-width="5"/>
<path d="M2239.5 217.5c1.500 1.500 .500 5-2 9l-18 22.500l-6.500-5l19-22c3-3.500 6-5.500 7.500-4.500z" fill="#fafafa" stroke="#333" stroke-width="2.200" stroke-linejoin="round"/>
<path d="M2190.5 254.5c4 .500 6-1.500 7-5.500c1-5 5-7.500 10-6.500c5.500 1 8.500 6 7 11c-2 7-9 9.500-15 8c-4-1-7.500-3.500-9-7z" fill="#83beec" stroke="#fff" stroke-width="5"/>
<path d="M2190.5 254.5c4 .500 6-1.500 7-5.500c1-5 5-7.500 10-6.500c5.500 1 8.500 6 7 11c-2 7-9 9.500-15 8c-4-1-7.500-3.500-9-7z" fill="#83beec" stroke="#0f6cbd" stroke-width="2.200" stroke-linejoin="round"/>
<rect x="2308.8" y="201.1" width="62.2" height="47.3" fill="#f8f8f8" stroke="#4d4b49" stroke-width="2.300"/><path d="M2330.1 201.1V248.4M2350.8 201.1V248.4M2308.8 216.7H2371M2308.8 233.2H2371" stroke="#4d4b49" stroke-width="2.300"/>
<path d="M2319 216.700H2375.600V233.200H2319l-9-8.300z" fill="#83beec" stroke="#fff" stroke-width="5"/><path d="M2321 216.700H2375.600V233.200H2321z" fill="#83beec" stroke="#0f6cbd" stroke-width="2.300"/><path d="M2335.500 216.700V233.200M2355.300 216.700V233.200" stroke="#0f6cbd" stroke-width="2.300"/>
<path d="M2306 224.900h27" stroke="#fff" stroke-width="6"/><g stroke="#1a86d0" stroke-width="2.300" fill="none" stroke-linecap="round" stroke-linejoin="round"><path d="M2306 224.900h27M2319.500 211l-14 13.900l14 13.900"/></g>
<rect x="2407.4" y="201.1" width="62" height="47.3" fill="#f8f8f8" stroke="#4d4b49" stroke-width="2.300"/><path d="M2428.5 201.1V248.4M2449 201.1V248.4M2407.4 216.7H2469.4M2407.4 233.2H2469.4" stroke="#4d4b49" stroke-width="2.300"/>
<rect x="2400" y="214" width="80" height="22" fill="#fff"/><path d="M2415.700 216.700H2444l8 8.300l-8 8.200H2415.700z" fill="#83beec" stroke="#0f6cbd" stroke-width="2.300" stroke-linejoin="round"/><path d="M2437 216.700V233.200" stroke="#0f6cbd" stroke-width="2.300"/>
<path d="M2407.400 214V201.100h62v12.900M2407.400 236v12.400h62V236" stroke="#4d4b49" stroke-width="2.300" fill="none"/><path d="M2407.400 216.700h9M2407.400 233.200h9" stroke="#4d4b49" stroke-width="2.300"/>
<path d="M2448 214l23.500 24M2471.500 214l-23.500 24" stroke="#e8302a" stroke-width="2.500" stroke-linecap="round"/>
<rect x="2506.1" y="201.1" width="62.1" height="47.3" fill="#f8f8f8" stroke="#4d4b49" stroke-width="2.300"/><path d="M2522.1 201.1V248.4M2552 201.1V248.4M2506.1 216.7H2568.2M2506.1 233.2H2568.2" stroke="#4d4b49" stroke-width="2.300"/>
<rect x="2522.100" y="216.700" width="29.900" height="16.500" fill="#83beec" stroke="#0f6cbd" stroke-width="2.300"/><path d="M2520.500 192.400h33.500M2520.500 189v6.800M2554 189v6.800" stroke="#1a86d0" stroke-width="2.200"/>
<path d="M2660.500 201v-5.500h-25l13.500 14l-13.500 13.500h25v-5.500" stroke="#333" stroke-width="2.300" fill="none" stroke-linejoin="miter"/>
<rect x="2631.800" y="253" width="32.500" height="28" fill="#f8f8f8" stroke="#333" stroke-width="2.300"/><path d="M2631.800 257.500h32.500" stroke="#333" stroke-width="2"/><g stroke="#1a86d0" stroke-width="2.300" fill="none" stroke-linecap="round" stroke-linejoin="round"><path d="M2647 261v15.500M2640.500 270.500l6.500 6.500l6.500-6.500"/></g>
<g stroke="#a03aa8" stroke-width="2.300" stroke-linejoin="round"><path d="M2632 329.500l20.500-20l11 11.500l-20.500 20z" fill="#fafafa"/><path d="M2632 329.500l8-7.800l11 11.500l-8 7.800z" fill="#d99ad9"/></g>
<path d="M2890.400 210.800h34.500v5l-12 14v13.500h-10.500v-13.500l-12-14z" fill="#fafafa" stroke="#333" stroke-width="2.300" stroke-linejoin="miter"/>
<circle cx="3006.800" cy="217" r="22.500" fill="#fafafa" stroke="#333" stroke-width="2.300"/><path d="M2990.500 233.500L2966 257" stroke="#333" stroke-width="2.500" stroke-linecap="round"/>
<path d="M3155.500 194.400H3130.400v60.900h45.100V227" fill="#f8f8f8" stroke="#1a86d0" stroke-width="2.400"/>
<g transform="translate(3153.200 226.500) rotate(45)"><rect x="-14.600" y="-5.600" width="29.200" height="11.200" fill="#fafafa" stroke="#fff" stroke-width="5"/><rect x="-14.600" y="-5.600" width="29.200" height="11.200" fill="#fafafa" stroke="#1a86d0" stroke-width="2.400"/><rect x="-9.700" y="-1.600" width="19.400" height="3.200" fill="#1a86d0"/></g>
<path d="M3173 198.800L3177.900 190.200L3189.900 202.200L3181 207.600z" fill="#fafafa" stroke="#1a86d0" stroke-width="2.400" stroke-linejoin="miter"/>
<g transform="translate(3170.300 209.600) rotate(45)"><rect x="-17.100" y="-8.300" width="34.200" height="16.600" fill="#fff" stroke="#fff" stroke-width="5"/><rect x="-17.100" y="-8.300" width="34.200" height="11.100" fill="#fafafa" stroke="#1a86d0" stroke-width="2.400"/><rect x="-14.300" y="2.800" width="27.800" height="5.500" fill="#1a86d0"/></g>
<g stroke="#d83b01" stroke-width="2.400" fill="#fafafa"><rect x="3278" y="195" width="60" height="60.200"/><rect x="3284.700" y="202" width="19.800" height="19.300"/><rect x="3312.700" y="202" width="19.800" height="19.300"/><rect x="3284.700" y="229.300" width="19.800" height="19.300"/><rect x="3312.700" y="229.300" width="19.800" height="19.300"/></g>
<rect x="3419" y="195" width="60" height="60" fill="#f8f8f8" stroke="#4d4b49" stroke-width="2.300"/><rect x="3420.200" y="196.200" width="57.600" height="6.500" fill="#c8c8c8"/><path d="M3419 203.500h60" stroke="#4d4b49" stroke-width="2"/>
<path d="M3419 221h60M3419 238.500h60M3439 238.500V255M3459 238.500V255" stroke="#8a8886" stroke-width="2"/>
<circle cx="3447" cy="220.500" r="20.500" fill="#fff"/><circle cx="3447" cy="220.500" r="18" fill="#fafafa" stroke="#333" stroke-width="2.300"/><path d="M3460 233.500l19 19.500" stroke="#fff" stroke-width="6"/><path d="M3460 233.500l19 20" stroke="#333" stroke-width="2.500" stroke-linecap="round"/>
<rect x="3437" y="217.500" width="6.500" height="11" fill="#c8c8c8" stroke="#8a8886" stroke-width="1.400"/><rect x="3443.500" y="209" width="6.500" height="19.500" fill="#fafafa" stroke="#333" stroke-width="1.600"/><rect x="3450" y="213.500" width="6.500" height="15" fill="#83beec" stroke="#0f6cbd" stroke-width="1.600"/>
<g stroke="#1a8a4c" stroke-width="2.300" stroke-linejoin="round">
<path d="M3538 194.400H3566.500L3546.400 239.600H3528C3522 239.600 3519.500 236 3520.800 230L3526.500 208C3528.500 199.500 3532 194.400 3538 194.400Z" fill="#f9f9f9"/>
<path d="M3559.500 194.400H3566C3572 194.400 3574 198.500 3575.500 204C3576.500 208 3578.500 209.800 3582.500 209.800H3567C3562.500 209.800 3559.500 211.500 3557.800 214.500L3555.500 211Z" fill="#8cc5a3"/>
<path d="M3549.500 255.600H3544.500C3538.500 255.600 3536.500 251.500 3535 246C3534 242 3532 239.800 3528 239.600H3546.400C3550.500 239.600 3553 238 3554.500 235.500L3556 240Z" fill="#8cc5a3"/>
<path d="M3567 209.800H3583C3589 209.800 3591.500 213.500 3590.200 219.500L3584.500 242C3582.300 250.500 3578.500 255.600 3572.500 255.600H3549.500L3562.200 213.500C3563 211 3564.500 209.800 3567 209.800Z" fill="#f9f9f9"/>
<path d="M3559.200 212.300L3563 211.500L3552 238.200L3547.200 238.200Z" fill="#fff" stroke-width="2"/></g></svg>
<!-- part_grid -->
<div style="position:absolute;left:16.3px;top:417px;width:224.3px;height:46.8px;background:#fff;border-radius:8px;box-shadow:0 0 0 1px rgba(0,0,0,.13)"></div>
<span class="t" style="left:22.13px;top:425.85px;font-size:31.00px;color:#242424;transform:scaleX(0.9268);">A2</span>
<svg style="position:absolute;left:208.2px;top:435.3px;" width="23" height="13.8" viewBox="0 0 23 13.8" fill="none"><path d="M2 2 L11.5 11.8 L21 2" stroke="#242424" stroke-width="2.3" stroke-linecap="round" stroke-linejoin="round"/></svg>
<div style="position:absolute;left:261.4px;top:429.3px;width:5.6px;height:5.4px;background:#3b3b3b"></div>
<div style="position:absolute;left:261.4px;top:437.8px;width:5.6px;height:5.4px;background:#3b3b3b"></div>
<div style="position:absolute;left:261.4px;top:446.3px;width:5.6px;height:5.4px;background:#3b3b3b"></div>
<div style="position:absolute;left:288.6px;top:417px;width:187.6px;height:46.8px;background:#fff;border-radius:8px;box-shadow:0 0 0 1px rgba(0,0,0,.13)"></div>
<span class="t" style="left:406.80px;top:419.93px;font-size:38.00px;color:#3b3b3b;transform:scaleX(1.0487);font-weight:700;font-style:italic;font-family:'Liberation Serif',serif;">fx</span>
<svg style="position:absolute;left:450.6px;top:435.3px;" width="23" height="13.8" viewBox="0 0 23 13.8" fill="none"><path d="M2 2 L11.5 11.8 L21 2" stroke="#9a9a9a" stroke-width="2.3" stroke-linecap="round" stroke-linejoin="round"/></svg>
<div style="position:absolute;left:488.2px;top:417px;width:3329.5px;height:46.8px;background:#fff;border-radius:8px;box-shadow:0 0 0 1px rgba(0,0,0,.13)"></div>
<span class="t" style="left:509.66px;top:427.00px;font-size:30.00px;color:#242424;transform:scaleX(1.0405);">11/03/2024</span>
<svg style="position:absolute;left:3787px;top:432.5px;" width="23" height="13.8" viewBox="0 0 23 13.8" fill="none"><path d="M2 2 L11.5 11.8 L21 2" stroke="#242424" stroke-width="2.3" stroke-linecap="round" stroke-linejoin="round"/></svg>
<div style="position:absolute;left:0;top:0;width:3006px;height:2168.5px;overflow:hidden"><div style="position:absolute;left:0px;top:480px;width:3006px;height:1688.5px;background:#fff"></div><div style="position:absolute;left:0px;top:480px;width:3006px;height:42px;background:#f0f0f0"></div><div style="position:absolute;left:58.5px;top:480px;width:301px;height:42px;background:#e1e1e1"></div><div style="position:absolute;left:58.5px;top:520px;width:301px;height:2.6px;background:#1e6e42"></div><div style="position:absolute;left:0px;top:522px;width:58.5px;height:1647px;background:#f0f0f0"></div><div style="position:absolute;left:0px;top:565.5px;width:58.5px;height:43px;background:#e1e1e1"></div><div style="position:absolute;left:56px;top:565.5px;width:2.5px;height:43px;background:#1e6e42"></div><div style="position:absolute;left:359px;top:480px;width:1.2px;height:42px;background:#dcdcdc"></div><span class="t" style="left:199.38px;top:487.35px;font-size:31.00px;color:#1e6e42;transform:scaleX(0.9300);">A</span><div style="position:absolute;left:681.5px;top:480px;width:1.2px;height:42px;background:#dcdcdc"></div><span class="t" style="left:510.70px;top:487.35px;font-size:31.00px;color:#444;transform:scaleX(0.9300);">B</span><div style="position:absolute;left:1004.5px;top:480px;width:1.2px;height:42px;background:#dcdcdc"></div><span class="t" style="left:832.94px;top:487.35px;font-size:31.00px;color:#444;transform:scaleX(0.9300);">C</span><div style="position:absolute;left:1305.8px;top:480px;width:1.2px;height:42px;background:#dcdcdc"></div><span class="t" style="left:1144.73px;top:487.35px;font-size:31.00px;color:#444;transform:scaleX(0.9300);">D</span><div style="position:absolute;left:1806px;top:480px;width:1.2px;height:42px;background:#dcdcdc"></div><span class="t" style="left:1546.20px;top:487.35px;font-size:31.00px;color:#444;transform:scaleX(0.9300);">E</span><div style="position:absolute;left:2063px;top:480px;width:1.2px;height:42px;background:#dcdcdc"></div><span class="t" style="left:1925.59px;top:487.35px;font-size:31.00px;color:#444;transform:scaleX(0.9300);">F</span><div style="position:absolute;left:2341.7px;top:480px;width:1.2px;height:42px;background:#dcdcdc"></div><span class="t" style="left:2192.00px;top:487.35px;font-size:31.00px;color:#444;transform:scaleX(0.9300);">G</span><div style="position:absolute;left:2621px;top:480px;width:1.2px;height:42px;background:#dcdcdc"></div><span class="t" style="left:2471.44px;top:487.35px;font-size:31.00px;color:#444;transform:scaleX(0.9300);">H</span><div style="position:absolute;left:2989.3px;top:480px;width:1.2px;height:42px;background:#dcdcdc"></div><span class="t" style="left:2801.65px;top:487.35px;font-size:31.00px;color:#444;transform:scaleX(0.9300);">I</span><div style="position:absolute;left:58.5px;top:522.4px;width:2947.5px;height:41.6px;background:#c0c0c0"></div><span class="t" style="left:63.20px;top:530.84px;font-size:29.60px;color:#fff;transform:scaleX(0.9532);font-weight:700;">Posting Date</span><div style="position:absolute;left:321.5px;top:526.5px;width:36.9px;height:36.7px;background:#fff;border:1px solid #ededed;box-sizing:border-box"></div><span class="t" style="left:364.12px;top:530.84px;font-size:29.60px;color:#fff;transform:scaleX(0.9901);font-weight:700;">Document Date</span><div style="position:absolute;left:644px;top:526.5px;width:36.9px;height:36.7px;background:#fff;border:1px solid #ededed;box-sizing:border-box"></div><span class="t" style="left:686.67px;top:530.84px;font-size:29.60px;color:#fff;transform:scaleX(0.9656);font-weight:700;">Document Type</span><div style="position:absolute;left:967px;top:526.5px;width:36.9px;height:36.7px;background:#fff;border:1px solid #ededed;box-sizing:border-box"></div><span class="t" style="left:1009.62px;top:530.84px;font-size:29.60px;color:#fff;transform:scaleX(0.9892);font-weight:700;">Document No.</span><div style="position:absolute;left:1268.3px;top:526.5px;width:36.9px;height:36.7px;background:#fff;border:1px solid #ededed;box-sizing:border-box"></div><span class="t" style="left:1310.95px;top:530.84px;font-size:29.60px;color:#fff;transform:scaleX(0.9746);font-weight:700;">External Document No.</span><div style="position:absolute;left:1768.5px;top:526.5px;width:36.9px;height:36.7px;background:#fff;border:1px solid #ededed;box-sizing:border-box"></div><span class="t" style="left:1812.89px;top:530.84px;font-size:29.60px;color:#fff;transform:scaleX(0.9605);font-weight:700;">Vendor No.</span><div style="position:absolute;left:2025.5px;top:526.5px;width:36.9px;height:36.7px;background:#fff;border:1px solid #ededed;box-sizing:border-box"></div><span class="t" style="left:2069.89px;top:530.84px;font-size:29.60px;color:#fff;transform:scaleX(0.9626);font-weight:700;">Vendor Name</span><div style="position:absolute;left:2304.2px;top:526.5px;width:36.9px;height:36.7px;background:#fff;border:1px solid #ededed;box-sizing:border-box"></div><span class="t" style="left:2346.84px;top:530.84px;font-size:29.60px;color:#fff;transform:scaleX(0.9809);font-weight:700;">Description</span><div style="position:absolute;left:2583.5px;top:526.5px;width:36.9px;height:36.7px;background:#fff;border:1px solid #ededed;box-sizing:border-box"></div><span class="t" style="left:2626.12px;top:530.84px;font-size:29.60px;color:#fff;transform:scaleX(0.9909);font-weight:700;">Department Code</span><div style="position:absolute;left:2951.8px;top:526.5px;width:36.9px;height:36.7px;background:#fff;border:1px solid #ededed;box-sizing:border-box"></div><span class="t" style="left:2995.02px;top:530.84px;font-size:29.60px;color:#fff;transform:scaleX(0.8253);font-weight:700;">C</span><div style="position:absolute;left:58.5px;top:565.5px;width:2947.5px;height:43px;background:#c0e6f5"></div><div style="position:absolute;left:58.5px;top:607.8px;width:2947.5px;height:1.4px;background:#56b6e6"></div><div style="position:absolute;left:0px;top:607.5px;width:58.5px;height:1.2px;background:#dcdcdc"></div><span class="t" style="left:19.13px;top:574.95px;font-size:28.40px;color:#1e6e42;transform:scaleX(1.1000);">2</span><span class="t" style="left:197.86px;top:574.78px;font-size:28.60px;color:#000;transform:scaleX(1.0915);">11/03/2024</span><span class="t" style="left:520.36px;top:574.78px;font-size:28.60px;color:#000;transform:scaleX(1.0915);">11/03/2024</span><span class="t" style="left:685.54px;top:574.78px;font-size:28.60px;color:#000;transform:scaleX(1.0816);">Invoice</span><span class="t" style="left:1010.07px;top:574.78px;font-size:28.60px;color:#000;transform:scaleX(1.0846);">108202</span><span class="t" style="left:1311.27px;top:574.78px;font-size:28.60px;color:#000;transform:scaleX(1.0846);">107202</span><span class="t" style="left:1812.27px;top:574.78px;font-size:28.60px;color:#000;transform:scaleX(1.0779);">50000</span><span class="t" style="left:2067.05px;top:574.78px;font-size:28.60px;color:#000;transform:scaleX(1.0405);">Nod Publishers</span><span class="t" style="left:2345.58px;top:574.78px;font-size:28.60px;color:#000;transform:scaleX(1.0648);">Invoice 107202</span><div style="position:absolute;left:58.5px;top:650.8px;width:2947.5px;height:1.4px;background:#56b6e6"></div><div style="position:absolute;left:0px;top:650.5px;width:58.5px;height:1.2px;background:#dcdcdc"></div><span class="t" style="left:19.21px;top:617.95px;font-size:28.40px;color:#444;transform:scaleX(1.1000);">3</span><span class="t" style="left:197.86px;top:617.78px;font-size:28.60px;color:#000;transform:scaleX(1.0915);">10/03/2024</span><span class="t" style="left:520.36px;top:617.78px;font-size:28.60px;color:#000;transform:scaleX(1.0915);">10/03/2024</span><span class="t" style="left:685.54px;top:617.78px;font-size:28.60px;color:#000;transform:scaleX(1.0816);">Invoice</span><span class="t" style="left:1010.08px;top:617.78px;font-size:28.60px;color:#000;transform:scaleX(1.0804);">108200</span><span class="t" style="left:1311.28px;top:617.78px;font-size:28.60px;color:#000;transform:scaleX(1.0804);">107200</span><span class="t" style="left:1812.27px;top:617.78px;font-size:28.60px;color:#000;transform:scaleX(1.0779);">50000</span><span class="t" style="left:2067.05px;top:617.78px;font-size:28.60px;color:#000;transform:scaleX(1.0405);">Nod Publishers</span><span class="t" style="left:2345.59px;top:617.78px;font-size:28.60px;color:#000;transform:scaleX(1.0628);">Invoice 107200</span><div style="position:absolute;left:58.5px;top:651.5px;width:2947.5px;height:43px;background:#c0e6f5"></div><div style="position:absolute;left:58.5px;top:693.8px;width:2947.5px;height:1.4px;background:#56b6e6"></div><div style="position:absolute;left:0px;top:693.5px;width:58.5px;height:1.2px;background:#dcdcdc"></div><span class="t" style="left:19.21px;top:660.95px;font-size:28.40px;color:#444;transform:scaleX(1.1000);">4</span><span class="t" style="left:197.86px;top:660.78px;font-size:28.60px;color:#000;transform:scaleX(1.0915);">12/02/2024</span><span class="t" style="left:520.36px;top:660.78px;font-size:28.60px;color:#000;transform:scaleX(1.0915);">12/02/2024</span><span class="t" style="left:685.93px;top:660.78px;font-size:28.60px;color:#000;transform:scaleX(1.0455);">Payment</span><span class="t" style="left:1010.08px;top:660.78px;font-size:28.60px;color:#000;transform:scaleX(1.0829);">108189</span><span class="t" style="left:1311.28px;top:660.78px;font-size:28.60px;color:#000;transform:scaleX(1.0829);">107189</span><span class="t" style="left:1812.27px;top:660.78px;font-size:28.60px;color:#000;transform:scaleX(1.0779);">50000</span><span class="t" style="left:2067.05px;top:660.78px;font-size:28.60px;color:#000;transform:scaleX(1.0405);">Nod Publishers</span><span class="t" style="left:2345.59px;top:660.78px;font-size:28.60px;color:#000;transform:scaleX(1.0640);">Invoice 107189</span><div style="position:absolute;left:58.5px;top:736.8px;width:2947.5px;height:1.4px;background:#56b6e6"></div><div style="position:absolute;left:0px;top:736.5px;width:58.5px;height:1.2px;background:#dcdcdc"></div><span class="t" style="left:19.13px;top:703.95px;font-size:28.40px;color:#444;transform:scaleX(1.1000);">5</span><span class="t" style="left:197.86px;top:703.78px;font-size:28.60px;color:#000;transform:scaleX(1.0915);">12/02/2024</span><span class="t" style="left:520.36px;top:703.78px;font-size:28.60px;color:#000;transform:scaleX(1.0915);">12/02/2024</span><span class="t" style="left:685.54px;top:703.78px;font-size:28.60px;color:#000;transform:scaleX(1.0816);">Invoice</span><span class="t" style="left:1010.08px;top:703.78px;font-size:28.60px;color:#000;transform:scaleX(1.0829);">108189</span><span class="t" style="left:1311.28px;top:703.78px;font-size:28.60px;color:#000;transform:scaleX(1.0829);">107189</span><span class="t" style="left:1812.27px;top:703.78px;font-size:28.60px;color:#000;transform:scaleX(1.0779);">50000</span><span class="t" style="left:2067.05px;top:703.78px;font-size:28.60px;color:#000;transform:scaleX(1.0405);">Nod Publishers</span><span class="t" style="left:2345.59px;top:703.78px;font-size:28.60px;color:#000;transform:scaleX(1.0640);">Invoice 107189</span><div style="position:absolute;left:58.5px;top:737.5px;width:2947.5px;height:43px;background:#c0e6f5"></div><div style="position:absolute;left:58.5px;top:779.8px;width:2947.5px;height:1.4px;background:#56b6e6"></div><div style="position:absolute;left:0px;top:779.5px;width:58.5px;height:1.2px;background:#dcdcdc"></div><span class="t" style="left:19.01px;top:746.95px;font-size:28.40px;color:#444;transform:scaleX(1.1000);">6</span><span class="t" style="left:197.86px;top:746.78px;font-size:28.60px;color:#000;transform:scaleX(1.0915);">10/02/2024</span><span class="t" style="left:520.36px;top:746.78px;font-size:28.60px;color:#000;transform:scaleX(1.0915);">10/02/2024</span><span class="t" style="left:685.93px;top:746.78px;font-size:28.60px;color:#000;transform:scaleX(1.0455);">Payment</span><span class="t" style="left:1010.08px;top:746.78px;font-size:28.60px;color:#000;transform:scaleX(1.0821);">108186</span><span class="t" style="left:1311.28px;top:746.78px;font-size:28.60px;color:#000;transform:scaleX(1.0821);">107186</span><span class="t" style="left:1812.27px;top:746.78px;font-size:28.60px;color:#000;transform:scaleX(1.0779);">50000</span><span class="t" style="left:2067.05px;top:746.78px;font-size:28.60px;color:#000;transform:scaleX(1.0405);">Nod Publishers</span><span class="t" style="left:2345.59px;top:746.78px;font-size:28.60px;color:#000;transform:scaleX(1.0636);">Invoice 107186</span><div style="position:absolute;left:58.5px;top:822.8px;width:2947.5px;height:1.4px;background:#56b6e6"></div><div style="position:absolute;left:0px;top:822.5px;width:58.5px;height:1.2px;background:#dcdcdc"></div><span class="t" style="left:19.09px;top:789.95px;font-size:28.40px;color:#444;transform:scaleX(1.1000);">7</span><span class="t" style="left:197.86px;top:789.78px;font-size:28.60px;color:#000;transform:scaleX(1.0915);">10/02/2024</span><span class="t" style="left:520.36px;top:789.78px;font-size:28.60px;color:#000;transform:scaleX(1.0915);">10/02/2024</span><span class="t" style="left:685.54px;top:789.78px;font-size:28.60px;color:#000;transform:scaleX(1.0816);">Invoice</span><span class="t" style="left:1010.08px;top:789.78px;font-size:28.60px;color:#000;transform:scaleX(1.0821);">108186</span><span class="t" style="left:1311.28px;top:789.78px;font-size:28.60px;color:#000;transform:scaleX(1.0821);">107186</span><span class="t" style="left:1812.27px;top:789.78px;font-size:28.60px;color:#000;transform:scaleX(1.0779);">50000</span><span class="t" style="left:2067.05px;top:789.78px;font-size:28.60px;color:#000;transform:scaleX(1.0405);">Nod Publishers</span><span class="t" style="left:2345.59px;top:789.78px;font-size:28.60px;color:#000;transform:scaleX(1.0636);">Invoice 107186</span><div style="position:absolute;left:58.5px;top:823.5px;width:2947.5px;height:43px;background:#c0e6f5"></div><div style="position:absolute;left:58.5px;top:865.8px;width:2947.5px;height:1.4px;background:#56b6e6"></div><div style="position:absolute;left:0px;top:865.5px;width:58.5px;height:1.2px;background:#dcdcdc"></div><span class="t" style="left:19.13px;top:832.95px;font-size:28.40px;color:#444;transform:scaleX(1.1000);">8</span><span class="t" style="left:197.86px;top:832.78px;font-size:28.60px;color:#000;transform:scaleX(1.0915);">12/01/2024</span><span class="t" style="left:520.36px;top:832.78px;font-size:28.60px;color:#000;transform:scaleX(1.0915);">12/01/2024</span><span class="t" style="left:685.93px;top:832.78px;font-size:28.60px;color:#000;transform:scaleX(1.0455);">Payment</span><span class="t" style="left:1010.08px;top:832.78px;font-size:28.60px;color:#000;transform:scaleX(1.0821);">108176</span><span class="t" style="left:1311.28px;top:832.78px;font-size:28.60px;color:#000;transform:scaleX(1.0821);">107176</span><span class="t" style="left:1812.27px;top:832.78px;font-size:28.60px;color:#000;transform:scaleX(1.0779);">50000</span><span class="t" style="left:2067.05px;top:832.78px;font-size:28.60px;color:#000;transform:scaleX(1.0405);">Nod Publishers</span><span class="t" style="left:2345.59px;top:832.78px;font-size:28.60px;color:#000;transform:scaleX(1.0636);">Invoice 107176</span><div style="position:absolute;left:58.5px;top:908.8px;width:2947.5px;height:1.4px;background:#56b6e6"></div><div style="position:absolute;left:0px;top:908.5px;width:58.5px;height:1.2px;background:#dcdcdc"></div><span class="t" style="left:19.09px;top:875.95px;font-size:28.40px;color:#444;transform:scaleX(1.1000);">9</span><span class="t" style="left:197.86px;top:875.78px;font-size:28.60px;color:#000;transform:scaleX(1.0915);">12/01/2024</span><span class="t" style="left:520.36px;top:875.78px;font-size:28.60px;color:#000;transform:scaleX(1.0915);">12/01/2024</span><span class="t" style="left:685.54px;top:875.78px;font-size:28.60px;color:#000;transform:scaleX(1.0816);">Invoice</span><span class="t" style="left:1010.08px;top:875.78px;font-size:28.60px;color:#000;transform:scaleX(1.0821);">108176</span><span class="t" style="left:1311.28px;top:875.78px;font-size:28.60px;color:#000;transform:scaleX(1.0821);">107176</span><span class="t" style="left:1812.27px;top:875.78px;font-size:28.60px;color:#000;transform:scaleX(1.0779);">50000</span><span class="t" style="left:2067.05px;top:875.78px;font-size:28.60px;color:#000;transform:scaleX(1.0405);">Nod Publishers</span><span class="t" style="left:2345.59px;top:875.78px;font-size:28.60px;color:#000;transform:scaleX(1.0636);">Invoice 107176</span><div style="position:absolute;left:58.5px;top:909.5px;width:2947.5px;height:43px;background:#c0e6f5"></div><div style="position:absolute;left:58.5px;top:951.8px;width:2947.5px;height:1.4px;background:#56b6e6"></div><div style="position:absolute;left:0px;top:951.5px;width:58.5px;height:1.2px;background:#dcdcdc"></div><span class="t" style="left:9.86px;top:918.95px;font-size:28.40px;color:#444;transform:scaleX(1.1000);">10</span><span class="t" style="left:197.86px;top:918.78px;font-size:28.60px;color:#000;transform:scaleX(1.0915);">11/01/2024</span><span class="t" style="left:520.36px;top:918.78px;font-size:28.60px;color:#000;transform:scaleX(1.0915);">11/01/2024</span><span class="t" style="left:685.93px;top:918.78px;font-size:28.60px;color:#000;transform:scaleX(1.0455);">Payment</span><span class="t" style="left:1010.09px;top:918.78px;font-size:28.60px;color:#000;transform:scaleX(1.0771);">108174</span><span class="t" style="left:1311.29px;top:918.78px;font-size:28.60px;color:#000;transform:scaleX(1.0771);">107174</span><span class="t" style="left:1812.27px;top:918.78px;font-size:28.60px;color:#000;transform:scaleX(1.0779);">50000</span><span class="t" style="left:2067.05px;top:918.78px;font-size:28.60px;color:#000;transform:scaleX(1.0405);">Nod Publishers</span><span class="t" style="left:2345.59px;top:918.78px;font-size:28.60px;color:#000;transform:scaleX(1.0612);">Invoice 107174</span><div style="position:absolute;left:58.5px;top:994.8px;width:2947.5px;height:1.4px;background:#56b6e6"></div><div style="position:absolute;left:0px;top:994.5px;width:58.5px;height:1.2px;background:#dcdcdc"></div><span class="t" style="left:10.01px;top:961.95px;font-size:28.40px;color:#444;transform:scaleX(1.1000);">11</span><span class="t" style="left:197.86px;top:961.78px;font-size:28.60px;color:#000;transform:scaleX(1.0915);">11/01/2024</span><span class="t" style="left:520.36px;top:961.78px;font-size:28.60px;color:#000;transform:scaleX(1.0915);">11/01/2024</span><span class="t" style="left:685.54px;top:961.78px;font-size:28.60px;color:#000;transform:scaleX(1.0816);">Invoice</span><span class="t" style="left:1010.09px;top:961.78px;font-size:28.60px;color:#000;transform:scaleX(1.0771);">108174</span><span class="t" style="left:1311.29px;top:961.78px;font-size:28.60px;color:#000;transform:scaleX(1.0771);">107174</span><span class="t" style="left:1812.27px;top:961.78px;font-size:28.60px;color:#000;transform:scaleX(1.0779);">50000</span><span class="t" style="left:2067.05px;top:961.78px;font-size:28.60px;color:#000;transform:scaleX(1.0405);">Nod Publishers</span><span class="t" style="left:2345.59px;top:961.78px;font-size:28.60px;color:#000;transform:scaleX(1.0612);">Invoice 107174</span><div style="position:absolute;left:58.5px;top:995.5px;width:2947.5px;height:43px;background:#c0e6f5"></div><div style="position:absolute;left:58.5px;top:1037.8px;width:2947.5px;height:1.4px;background:#56b6e6"></div><div style="position:absolute;left:0px;top:1037.5px;width:58.5px;height:1.2px;background:#dcdcdc"></div><span class="t" style="left:10.05px;top:1004.95px;font-size:28.40px;color:#444;transform:scaleX(1.1000);">12</span><span class="t" style="left:197.85px;top:1004.78px;font-size:28.60px;color:#000;transform:scaleX(1.0948);">14/12/2023</span><span class="t" style="left:520.35px;top:1004.78px;font-size:28.60px;color:#000;transform:scaleX(1.0948);">14/12/2023</span><span class="t" style="left:685.93px;top:1004.78px;font-size:28.60px;color:#000;transform:scaleX(1.0455);">Payment</span><span class="t" style="left:1010.07px;top:1004.78px;font-size:28.60px;color:#000;transform:scaleX(1.0846);">108167</span><span class="t" style="left:1311.27px;top:1004.78px;font-size:28.60px;color:#000;transform:scaleX(1.0846);">107167</span><span class="t" style="left:1812.27px;top:1004.78px;font-size:28.60px;color:#000;transform:scaleX(1.0779);">50000</span><span class="t" style="left:2067.05px;top:1004.78px;font-size:28.60px;color:#000;transform:scaleX(1.0405);">Nod Publishers</span><span class="t" style="left:2345.58px;top:1004.78px;font-size:28.60px;color:#000;transform:scaleX(1.0648);">Invoice 107167</span><div style="position:absolute;left:58.5px;top:1080.8px;width:2947.5px;height:1.4px;background:#56b6e6"></div><div style="position:absolute;left:0px;top:1080.5px;width:58.5px;height:1.2px;background:#dcdcdc"></div><span class="t" style="left:9.94px;top:1047.95px;font-size:28.40px;color:#444;transform:scaleX(1.1000);">13</span><span class="t" style="left:197.85px;top:1047.78px;font-size:28.60px;color:#000;transform:scaleX(1.0948);">14/12/2023</span><span class="t" style="left:520.35px;top:1047.78px;font-size:28.60px;color:#000;transform:scaleX(1.0948);">14/12/2023</span><span class="t" style="left:685.54px;top:1047.78px;font-size:28.60px;color:#000;transform:scaleX(1.0816);">Invoice</span><span class="t" style="left:1010.07px;top:1047.78px;font-size:28.60px;color:#000;transform:scaleX(1.0846);">108167</span><span class="t" style="left:1311.27px;top:1047.78px;font-size:28.60px;color:#000;transform:scaleX(1.0846);">107167</span><span class="t" style="left:1812.27px;top:1047.78px;font-size:28.60px;color:#000;transform:scaleX(1.0779);">50000</span><span class="t" style="left:2067.05px;top:1047.78px;font-size:28.60px;color:#000;transform:scaleX(1.0405);">Nod Publishers</span><span class="t" style="left:2345.58px;top:1047.78px;font-size:28.60px;color:#000;transform:scaleX(1.0648);">Invoice 107167</span><div style="position:absolute;left:58.5px;top:1081.5px;width:2947.5px;height:43px;background:#c0e6f5"></div><div style="position:absolute;left:58.5px;top:1123.8px;width:2947.5px;height:1.4px;background:#56b6e6"></div><div style="position:absolute;left:0px;top:1123.5px;width:58.5px;height:1.2px;background:#dcdcdc"></div><span class="t" style="left:9.70px;top:1090.95px;font-size:28.40px;color:#444;transform:scaleX(1.1000);">14</span><span class="t" style="left:197.85px;top:1090.78px;font-size:28.60px;color:#000;transform:scaleX(1.0948);">12/12/2023</span><span class="t" style="left:520.35px;top:1090.78px;font-size:28.60px;color:#000;transform:scaleX(1.0948);">12/12/2023</span><span class="t" style="left:685.93px;top:1090.78px;font-size:28.60px;color:#000;transform:scaleX(1.0455);">Payment</span><span class="t" style="left:1010.08px;top:1090.78px;font-size:28.60px;color:#000;transform:scaleX(1.0821);">108163</span><span class="t" style="left:1311.28px;top:1090.78px;font-size:28.60px;color:#000;transform:scaleX(1.0821);">107163</span><span class="t" style="left:1812.27px;top:1090.78px;font-size:28.60px;color:#000;transform:scaleX(1.0779);">50000</span><span class="t" style="left:2067.05px;top:1090.78px;font-size:28.60px;color:#000;transform:scaleX(1.0405);">Nod Publishers</span><span class="t" style="left:2345.59px;top:1090.78px;font-size:28.60px;color:#000;transform:scaleX(1.0636);">Invoice 107163</span><div style="position:absolute;left:58.5px;top:1166.8px;width:2947.5px;height:1.4px;background:#56b6e6"></div><div style="position:absolute;left:0px;top:1166.5px;width:58.5px;height:1.2px;background:#dcdcdc"></div><span class="t" style="left:9.90px;top:1133.95px;font-size:28.40px;color:#444;transform:scaleX(1.1000);">15</span><span class="t" style="left:197.85px;top:1133.78px;font-size:28.60px;color:#000;transform:scaleX(1.0948);">12/12/2023</span><span class="t" style="left:520.35px;top:1133.78px;font-size:28.60px;color:#000;transform:scaleX(1.0948);">12/12/2023</span><span class="t" style="left:685.54px;top:1133.78px;font-size:28.60px;color:#000;transform:scaleX(1.0816);">Invoice</span><span class="t" style="left:1010.08px;top:1133.78px;font-size:28.60px;color:#000;transform:scaleX(1.0821);">108163</span><span class="t" style="left:1311.28px;top:1133.78px;font-size:28.60px;color:#000;transform:scaleX(1.0821);">107163</span><span class="t" style="left:1812.27px;top:1133.78px;font-size:28.60px;color:#000;transform:scaleX(1.0779);">50000</span><span class="t" style="left:2067.05px;top:1133.78px;font-size:28.60px;color:#000;transform:scaleX(1.0405);">Nod Publishers</span><span class="t" style="left:2345.59px;top:1133.78px;font-size:28.60px;color:#000;transform:scaleX(1.0636);">Invoice 107163</span><div style="position:absolute;left:58.5px;top:1167.5px;width:2947.5px;height:43px;background:#c0e6f5"></div><div style="position:absolute;left:58.5px;top:1209.8px;width:2947.5px;height:1.4px;background:#56b6e6"></div><div style="position:absolute;left:0px;top:1209.5px;width:58.5px;height:1.2px;background:#dcdcdc"></div><span class="t" style="left:9.94px;top:1176.95px;font-size:28.40px;color:#444;transform:scaleX(1.1000);">16</span><span class="t" style="left:197.85px;top:1176.78px;font-size:28.60px;color:#000;transform:scaleX(1.0948);">11/12/2023</span><span class="t" style="left:520.35px;top:1176.78px;font-size:28.60px;color:#000;transform:scaleX(1.0948);">11/12/2023</span><span class="t" style="left:685.93px;top:1176.78px;font-size:28.60px;color:#000;transform:scaleX(1.0455);">Payment</span><span class="t" style="left:1010.08px;top:1176.78px;font-size:28.60px;color:#000;transform:scaleX(1.0838);">108161</span><span class="t" style="left:1311.28px;top:1176.78px;font-size:28.60px;color:#000;transform:scaleX(1.0838);">107161</span><span class="t" style="left:1812.27px;top:1176.78px;font-size:28.60px;color:#000;transform:scaleX(1.0779);">50000</span><span class="t" style="left:2067.05px;top:1176.78px;font-size:28.60px;color:#000;transform:scaleX(1.0405);">Nod Publishers</span><span class="t" style="left:2345.58px;top:1176.78px;font-size:28.60px;color:#000;transform:scaleX(1.0644);">Invoice 107161</span><div style="position:absolute;left:58.5px;top:1252.8px;width:2947.5px;height:1.4px;background:#56b6e6"></div><div style="position:absolute;left:0px;top:1252.5px;width:58.5px;height:1.2px;background:#dcdcdc"></div><span class="t" style="left:10.05px;top:1219.95px;font-size:28.40px;color:#444;transform:scaleX(1.1000);">17</span><span class="t" style="left:197.85px;top:1219.78px;font-size:28.60px;color:#000;transform:scaleX(1.0948);">11/12/2023</span><span class="t" style="left:520.35px;top:1219.78px;font-size:28.60px;color:#000;transform:scaleX(1.0948);">11/12/2023</span><span class="t" style="left:685.54px;top:1219.78px;font-size:28.60px;color:#000;transform:scaleX(1.0816);">Invoice</span><span class="t" style="left:1010.08px;top:1219.78px;font-size:28.60px;color:#000;transform:scaleX(1.0838);">108161</span><span class="t" style="left:1311.28px;top:1219.78px;font-size:28.60px;color:#000;transform:scaleX(1.0838);">107161</span><span class="t" style="left:1812.27px;top:1219.78px;font-size:28.60px;color:#000;transform:scaleX(1.0779);">50000</span><span class="t" style="left:2067.05px;top:1219.78px;font-size:28.60px;color:#000;transform:scaleX(1.0405);">Nod Publishers</span><span class="t" style="left:2345.58px;top:1219.78px;font-size:28.60px;color:#000;transform:scaleX(1.0644);">Invoice 107161</span><div style="position:absolute;left:58.5px;top:1253.5px;width:2947.5px;height:43px;background:#c0e6f5"></div><div style="position:absolute;left:58.5px;top:1295.8px;width:2947.5px;height:1.4px;background:#56b6e6"></div><div style="position:absolute;left:0px;top:1295.5px;width:58.5px;height:1.2px;background:#dcdcdc"></div><span class="t" style="left:9.94px;top:1262.95px;font-size:28.40px;color:#444;transform:scaleX(1.1000);">18</span><span class="t" style="left:197.85px;top:1262.78px;font-size:28.60px;color:#000;transform:scaleX(1.0948);">12/11/2023</span><span class="t" style="left:520.35px;top:1262.78px;font-size:28.60px;color:#000;transform:scaleX(1.0948);">12/11/2023</span><span class="t" style="left:685.93px;top:1262.78px;font-size:28.60px;color:#000;transform:scaleX(1.0455);">Payment</span><span class="t" style="left:1010.08px;top:1262.78px;font-size:28.60px;color:#000;transform:scaleX(1.0804);">108150</span><span class="t" style="left:1311.28px;top:1262.78px;font-size:28.60px;color:#000;transform:scaleX(1.0804);">107150</span><span class="t" style="left:1812.27px;top:1262.78px;font-size:28.60px;color:#000;transform:scaleX(1.0779);">50000</span><span class="t" style="left:2067.05px;top:1262.78px;font-size:28.60px;color:#000;transform:scaleX(1.0405);">Nod Publishers</span><span class="t" style="left:2345.59px;top:1262.78px;font-size:28.60px;color:#000;transform:scaleX(1.0628);">Invoice 107150</span><div style="position:absolute;left:58.5px;top:1338.8px;width:2947.5px;height:1.4px;background:#56b6e6"></div><div style="position:absolute;left:0px;top:1338.5px;width:58.5px;height:1.2px;background:#dcdcdc"></div><span class="t" style="left:9.97px;top:1305.95px;font-size:28.40px;color:#444;transform:scaleX(1.1000);">19</span><span class="t" style="left:197.85px;top:1305.78px;font-size:28.60px;color:#000;transform:scaleX(1.0948);">12/11/2023</span><span class="t" style="left:520.35px;top:1305.78px;font-size:28.60px;color:#000;transform:scaleX(1.0948);">12/11/2023</span><span class="t" style="left:685.54px;top:1305.78px;font-size:28.60px;color:#000;transform:scaleX(1.0816);">Invoice</span><span class="t" style="left:1010.08px;top:1305.78px;font-size:28.60px;color:#000;transform:scaleX(1.0804);">108150</span><span class="t" style="left:1311.28px;top:1305.78px;font-size:28.60px;color:#000;transform:scaleX(1.0804);">107150</span><span class="t" style="left:1812.27px;top:1305.78px;font-size:28.60px;color:#000;transform:scaleX(1.0779);">50000</span><span class="t" style="left:2067.05px;top:1305.78px;font-size:28.60px;color:#000;transform:scaleX(1.0405);">Nod Publishers</span><span class="t" style="left:2345.59px;top:1305.78px;font-size:28.60px;color:#000;transform:scaleX(1.0628);">Invoice 107150</span><div style="position:absolute;left:58.5px;top:1339.5px;width:2947.5px;height:43px;background:#c0e6f5"></div><div style="position:absolute;left:58.5px;top:1381.8px;width:2947.5px;height:1.4px;background:#56b6e6"></div><div style="position:absolute;left:0px;top:1381.5px;width:58.5px;height:1.2px;background:#dcdcdc"></div><span class="t" style="left:10.25px;top:1348.95px;font-size:28.40px;color:#444;transform:scaleX(1.1000);">20</span><span class="t" style="left:197.85px;top:1348.78px;font-size:28.60px;color:#000;transform:scaleX(1.0948);">10/11/2023</span><span class="t" style="left:520.35px;top:1348.78px;font-size:28.60px;color:#000;transform:scaleX(1.0948);">10/11/2023</span><span class="t" style="left:685.93px;top:1348.78px;font-size:28.60px;color:#000;transform:scaleX(1.0455);">Payment</span><span class="t" style="left:1010.07px;top:1348.78px;font-size:28.60px;color:#000;transform:scaleX(1.0846);">108147</span><span class="t" style="left:1311.27px;top:1348.78px;font-size:28.60px;color:#000;transform:scaleX(1.0846);">107147</span><span class="t" style="left:1812.27px;top:1348.78px;font-size:28.60px;color:#000;transform:scaleX(1.0779);">50000</span><span class="t" style="left:2067.05px;top:1348.78px;font-size:28.60px;color:#000;transform:scaleX(1.0405);">Nod Publishers</span><span class="t" style="left:2345.58px;top:1348.78px;font-size:28.60px;color:#000;transform:scaleX(1.0648);">Invoice 107147</span><div style="position:absolute;left:58.5px;top:1424.8px;width:2947.5px;height:1.4px;background:#56b6e6"></div><div style="position:absolute;left:0px;top:1424.5px;width:58.5px;height:1.2px;background:#dcdcdc"></div><span class="t" style="left:10.40px;top:1391.95px;font-size:28.40px;color:#444;transform:scaleX(1.1000);">21</span><span class="t" style="left:197.85px;top:1391.78px;font-size:28.60px;color:#000;transform:scaleX(1.0948);">10/11/2023</span><span class="t" style="left:520.35px;top:1391.78px;font-size:28.60px;color:#000;transform:scaleX(1.0948);">10/11/2023</span><span class="t" style="left:685.54px;top:1391.78px;font-size:28.60px;color:#000;transform:scaleX(1.0816);">Invoice</span><span class="t" style="left:1010.07px;top:1391.78px;font-size:28.60px;color:#000;transform:scaleX(1.0846);">108147</span><span class="t" style="left:1311.27px;top:1391.78px;font-size:28.60px;color:#000;transform:scaleX(1.0846);">107147</span><span class="t" style="left:1812.27px;top:1391.78px;font-size:28.60px;color:#000;transform:scaleX(1.0779);">50000</span><span class="t" style="left:2067.05px;top:1391.78px;font-size:28.60px;color:#000;transform:scaleX(1.0405);">Nod Publishers</span><span class="t" style="left:2345.58px;top:1391.78px;font-size:28.60px;color:#000;transform:scaleX(1.0648);">Invoice 107147</span><div style="position:absolute;left:58.5px;top:1425.5px;width:2947.5px;height:43px;background:#c0e6f5"></div><div style="position:absolute;left:58.5px;top:1467.8px;width:2947.5px;height:1.4px;background:#56b6e6"></div><div style="position:absolute;left:0px;top:1467.5px;width:58.5px;height:1.2px;background:#dcdcdc"></div><span class="t" style="left:10.44px;top:1434.95px;font-size:28.40px;color:#444;transform:scaleX(1.1000);">22</span><span class="t" style="left:198.96px;top:1434.78px;font-size:28.60px;color:#000;transform:scaleX(1.0870);">01/11/2023</span><span class="t" style="left:521.46px;top:1434.78px;font-size:28.60px;color:#000;transform:scaleX(1.0870);">01/11/2023</span><span class="t" style="left:685.93px;top:1434.78px;font-size:28.60px;color:#000;transform:scaleX(1.0455);">Payment</span><span class="t" style="left:1010.07px;top:1434.78px;font-size:28.60px;color:#000;transform:scaleX(1.0846);">108012</span><span class="t" style="left:1311.27px;top:1434.78px;font-size:28.60px;color:#000;transform:scaleX(1.0846);">107012</span><span class="t" style="left:1812.27px;top:1434.78px;font-size:28.60px;color:#000;transform:scaleX(1.0779);">50000</span><span class="t" style="left:2067.05px;top:1434.78px;font-size:28.60px;color:#000;transform:scaleX(1.0405);">Nod Publishers</span><span class="t" style="left:2345.58px;top:1434.78px;font-size:28.60px;color:#000;transform:scaleX(1.0648);">Invoice 107012</span><div style="position:absolute;left:58.5px;top:1510.8px;width:2947.5px;height:1.4px;background:#56b6e6"></div><div style="position:absolute;left:0px;top:1510.5px;width:58.5px;height:1.2px;background:#dcdcdc"></div><span class="t" style="left:10.33px;top:1477.95px;font-size:28.40px;color:#444;transform:scaleX(1.1000);">23</span><span class="t" style="left:198.96px;top:1477.78px;font-size:28.60px;color:#000;transform:scaleX(1.0870);">01/11/2023</span><span class="t" style="left:521.46px;top:1477.78px;font-size:28.60px;color:#000;transform:scaleX(1.0870);">01/11/2023</span><span class="t" style="left:685.54px;top:1477.78px;font-size:28.60px;color:#000;transform:scaleX(1.0816);">Invoice</span><span class="t" style="left:1010.07px;top:1477.78px;font-size:28.60px;color:#000;transform:scaleX(1.0846);">108012</span><span class="t" style="left:1311.27px;top:1477.78px;font-size:28.60px;color:#000;transform:scaleX(1.0846);">107012</span><span class="t" style="left:1812.27px;top:1477.78px;font-size:28.60px;color:#000;transform:scaleX(1.0779);">50000</span><span class="t" style="left:2067.05px;top:1477.78px;font-size:28.60px;color:#000;transform:scaleX(1.0405);">Nod Publishers</span><span class="t" style="left:2345.58px;top:1477.78px;font-size:28.60px;color:#000;transform:scaleX(1.0648);">Invoice 107012</span><div style="position:absolute;left:58.5px;top:1511.5px;width:2947.5px;height:43px;background:#c0e6f5"></div><div style="position:absolute;left:58.5px;top:1553.8px;width:2947.5px;height:1.4px;background:#56b6e6"></div><div style="position:absolute;left:0px;top:1553.5px;width:58.5px;height:1.2px;background:#dcdcdc"></div><span class="t" style="left:10.09px;top:1520.95px;font-size:28.40px;color:#444;transform:scaleX(1.1000);">24</span><span class="t" style="left:197.85px;top:1520.78px;font-size:28.60px;color:#000;transform:scaleX(1.0948);">12/10/2023</span><span class="t" style="left:520.35px;top:1520.78px;font-size:28.60px;color:#000;transform:scaleX(1.0948);">12/10/2023</span><span class="t" style="left:685.93px;top:1520.78px;font-size:28.60px;color:#000;transform:scaleX(1.0455);">Payment</span><span class="t" style="left:1010.07px;top:1520.78px;font-size:28.60px;color:#000;transform:scaleX(1.0846);">108137</span><span class="t" style="left:1311.27px;top:1520.78px;font-size:28.60px;color:#000;transform:scaleX(1.0846);">107137</span><span class="t" style="left:1812.27px;top:1520.78px;font-size:28.60px;color:#000;transform:scaleX(1.0779);">50000</span><span class="t" style="left:2067.05px;top:1520.78px;font-size:28.60px;color:#000;transform:scaleX(1.0405);">Nod Publishers</span><span class="t" style="left:2345.58px;top:1520.78px;font-size:28.60px;color:#000;transform:scaleX(1.0648);">Invoice 107137</span><div style="position:absolute;left:58.5px;top:1596.8px;width:2947.5px;height:1.4px;background:#56b6e6"></div><div style="position:absolute;left:0px;top:1596.5px;width:58.5px;height:1.2px;background:#dcdcdc"></div><span class="t" style="left:10.29px;top:1563.95px;font-size:28.40px;color:#444;transform:scaleX(1.1000);">25</span><span class="t" style="left:197.85px;top:1563.78px;font-size:28.60px;color:#000;transform:scaleX(1.0948);">12/10/2023</span><span class="t" style="left:520.35px;top:1563.78px;font-size:28.60px;color:#000;transform:scaleX(1.0948);">12/10/2023</span><span class="t" style="left:685.54px;top:1563.78px;font-size:28.60px;color:#000;transform:scaleX(1.0816);">Invoice</span><span class="t" style="left:1010.07px;top:1563.78px;font-size:28.60px;color:#000;transform:scaleX(1.0846);">108137</span><span class="t" style="left:1311.27px;top:1563.78px;font-size:28.60px;color:#000;transform:scaleX(1.0846);">107137</span><span class="t" style="left:1812.27px;top:1563.78px;font-size:28.60px;color:#000;transform:scaleX(1.0779);">50000</span><span class="t" style="left:2067.05px;top:1563.78px;font-size:28.60px;color:#000;transform:scaleX(1.0405);">Nod Publishers</span><span class="t" style="left:2345.58px;top:1563.78px;font-size:28.60px;color:#000;transform:scaleX(1.0648);">Invoice 107137</span><div style="position:absolute;left:58.5px;top:1597.5px;width:2947.5px;height:43px;background:#c0e6f5"></div><div style="position:absolute;left:58.5px;top:1639.8px;width:2947.5px;height:1.4px;background:#56b6e6"></div><div style="position:absolute;left:0px;top:1639.5px;width:58.5px;height:1.2px;background:#dcdcdc"></div><span class="t" style="left:10.33px;top:1606.95px;font-size:28.40px;color:#444;transform:scaleX(1.1000);">26</span><span class="t" style="left:197.85px;top:1606.78px;font-size:28.60px;color:#000;transform:scaleX(1.0948);">11/10/2023</span><span class="t" style="left:520.35px;top:1606.78px;font-size:28.60px;color:#000;transform:scaleX(1.0948);">11/10/2023</span><span class="t" style="left:685.93px;top:1606.78px;font-size:28.60px;color:#000;transform:scaleX(1.0455);">Payment</span><span class="t" style="left:1010.08px;top:1606.78px;font-size:28.60px;color:#000;transform:scaleX(1.0812);">108135</span><span class="t" style="left:1311.28px;top:1606.78px;font-size:28.60px;color:#000;transform:scaleX(1.0812);">107135</span><span class="t" style="left:1812.27px;top:1606.78px;font-size:28.60px;color:#000;transform:scaleX(1.0779);">50000</span><span class="t" style="left:2067.05px;top:1606.78px;font-size:28.60px;color:#000;transform:scaleX(1.0405);">Nod Publishers</span><span class="t" style="left:2345.59px;top:1606.78px;font-size:28.60px;color:#000;transform:scaleX(1.0632);">Invoice 107135</span><div style="position:absolute;left:58.5px;top:1682.8px;width:2947.5px;height:1.4px;background:#56b6e6"></div><div style="position:absolute;left:0px;top:1682.5px;width:58.5px;height:1.2px;background:#dcdcdc"></div><span class="t" style="left:10.44px;top:1649.95px;font-size:28.40px;color:#444;transform:scaleX(1.1000);">27</span><span class="t" style="left:197.85px;top:1649.78px;font-size:28.60px;color:#000;transform:scaleX(1.0948);">11/10/2023</span><span class="t" style="left:520.35px;top:1649.78px;font-size:28.60px;color:#000;transform:scaleX(1.0948);">11/10/2023</span><span class="t" style="left:685.54px;top:1649.78px;font-size:28.60px;color:#000;transform:scaleX(1.0816);">Invoice</span><span class="t" style="left:1010.08px;top:1649.78px;font-size:28.60px;color:#000;transform:scaleX(1.0812);">108135</span><span class="t" style="left:1311.28px;top:1649.78px;font-size:28.60px;color:#000;transform:scaleX(1.0812);">107135</span><span class="t" style="left:1812.27px;top:1649.78px;font-size:28.60px;color:#000;transform:scaleX(1.0779);">50000</span><span class="t" style="left:2067.05px;top:1649.78px;font-size:28.60px;color:#000;transform:scaleX(1.0405);">Nod Publishers</span><span class="t" style="left:2345.59px;top:1649.78px;font-size:28.60px;color:#000;transform:scaleX(1.0632);">Invoice 107135</span><div style="position:absolute;left:58.5px;top:1683.5px;width:2947.5px;height:43px;background:#c0e6f5"></div><div style="position:absolute;left:58.5px;top:1725.8px;width:2947.5px;height:1.4px;background:#56b6e6"></div><div style="position:absolute;left:0px;top:1725.5px;width:58.5px;height:1.2px;background:#dcdcdc"></div><span class="t" style="left:10.33px;top:1692.95px;font-size:28.40px;color:#444;transform:scaleX(1.1000);">28</span><span class="t" style="left:197.85px;top:1692.78px;font-size:28.60px;color:#000;transform:scaleX(1.0948);">12/09/2023</span><span class="t" style="left:520.35px;top:1692.78px;font-size:28.60px;color:#000;transform:scaleX(1.0948);">12/09/2023</span><span class="t" style="left:685.93px;top:1692.78px;font-size:28.60px;color:#000;transform:scaleX(1.0455);">Payment</span><span class="t" style="left:1010.08px;top:1692.78px;font-size:28.60px;color:#000;transform:scaleX(1.0812);">108125</span><span class="t" style="left:1311.28px;top:1692.78px;font-size:28.60px;color:#000;transform:scaleX(1.0812);">107125</span><span class="t" style="left:1812.27px;top:1692.78px;font-size:28.60px;color:#000;transform:scaleX(1.0779);">50000</span><span class="t" style="left:2067.05px;top:1692.78px;font-size:28.60px;color:#000;transform:scaleX(1.0405);">Nod Publishers</span><span class="t" style="left:2345.59px;top:1692.78px;font-size:28.60px;color:#000;transform:scaleX(1.0632);">Invoice 107125</span><div style="position:absolute;left:58.5px;top:1768.8px;width:2947.5px;height:1.4px;background:#56b6e6"></div><div style="position:absolute;left:0px;top:1768.5px;width:58.5px;height:1.2px;background:#dcdcdc"></div><span class="t" style="left:10.37px;top:1735.95px;font-size:28.40px;color:#444;transform:scaleX(1.1000);">29</span><span class="t" style="left:197.85px;top:1735.78px;font-size:28.60px;color:#000;transform:scaleX(1.0948);">12/09/2023</span><span class="t" style="left:520.35px;top:1735.78px;font-size:28.60px;color:#000;transform:scaleX(1.0948);">12/09/2023</span><span class="t" style="left:685.54px;top:1735.78px;font-size:28.60px;color:#000;transform:scaleX(1.0816);">Invoice</span><span class="t" style="left:1010.08px;top:1735.78px;font-size:28.60px;color:#000;transform:scaleX(1.0812);">108125</span><span class="t" style="left:1311.28px;top:1735.78px;font-size:28.60px;color:#000;transform:scaleX(1.0812);">107125</span><span class="t" style="left:1812.27px;top:1735.78px;font-size:28.60px;color:#000;transform:scaleX(1.0779);">50000</span><span class="t" style="left:2067.05px;top:1735.78px;font-size:28.60px;color:#000;transform:scaleX(1.0405);">Nod Publishers</span><span class="t" style="left:2345.59px;top:1735.78px;font-size:28.60px;color:#000;transform:scaleX(1.0632);">Invoice 107125</span><div style="position:absolute;left:58.5px;top:1769.5px;width:2947.5px;height:43px;background:#c0e6f5"></div><div style="position:absolute;left:58.5px;top:1811.8px;width:2947.5px;height:1.4px;background:#56b6e6"></div><div style="position:absolute;left:0px;top:1811.5px;width:58.5px;height:1.2px;background:#dcdcdc"></div><span class="t" style="left:10.44px;top:1778.95px;font-size:28.40px;color:#444;transform:scaleX(1.1000);">30</span><span class="t" style="left:197.85px;top:1778.78px;font-size:28.60px;color:#000;transform:scaleX(1.0948);">10/09/2023</span><span class="t" style="left:520.35px;top:1778.78px;font-size:28.60px;color:#000;transform:scaleX(1.0948);">10/09/2023</span><span class="t" style="left:685.93px;top:1778.78px;font-size:28.60px;color:#000;transform:scaleX(1.0455);">Payment</span><span class="t" style="left:1010.07px;top:1778.78px;font-size:28.60px;color:#000;transform:scaleX(1.0846);">108122</span><span class="t" style="left:1311.27px;top:1778.78px;font-size:28.60px;color:#000;transform:scaleX(1.0846);">107122</span><span class="t" style="left:1812.27px;top:1778.78px;font-size:28.60px;color:#000;transform:scaleX(1.0779);">50000</span><span class="t" style="left:2067.05px;top:1778.78px;font-size:28.60px;color:#000;transform:scaleX(1.0405);">Nod Publishers</span><span class="t" style="left:2345.58px;top:1778.78px;font-size:28.60px;color:#000;transform:scaleX(1.0648);">Invoice 107122</span><div style="position:absolute;left:58.5px;top:1854.8px;width:2947.5px;height:1.4px;background:#56b6e6"></div><div style="position:absolute;left:0px;top:1854.5px;width:58.5px;height:1.2px;background:#dcdcdc"></div><span class="t" style="left:10.60px;top:1821.95px;font-size:28.40px;color:#444;transform:scaleX(1.1000);">31</span><span class="t" style="left:197.85px;top:1821.78px;font-size:28.60px;color:#000;transform:scaleX(1.0948);">10/09/2023</span><span class="t" style="left:520.35px;top:1821.78px;font-size:28.60px;color:#000;transform:scaleX(1.0948);">10/09/2023</span><span class="t" style="left:685.54px;top:1821.78px;font-size:28.60px;color:#000;transform:scaleX(1.0816);">Invoice</span><span class="t" style="left:1010.07px;top:1821.78px;font-size:28.60px;color:#000;transform:scaleX(1.0846);">108122</span><span class="t" style="left:1311.27px;top:1821.78px;font-size:28.60px;color:#000;transform:scaleX(1.0846);">107122</span><span class="t" style="left:1812.27px;top:1821.78px;font-size:28.60px;color:#000;transform:scaleX(1.0779);">50000</span><span class="t" style="left:2067.05px;top:1821.78px;font-size:28.60px;color:#000;transform:scaleX(1.0405);">Nod Publishers</span><span class="t" style="left:2345.58px;top:1821.78px;font-size:28.60px;color:#000;transform:scaleX(1.0648);">Invoice 107122</span><div style="position:absolute;left:58.5px;top:1855.5px;width:2947.5px;height:43px;background:#c0e6f5"></div><div style="position:absolute;left:58.5px;top:1897.8px;width:2947.5px;height:1.4px;background:#56b6e6"></div><div style="position:absolute;left:0px;top:1897.5px;width:58.5px;height:1.2px;background:#dcdcdc"></div><span class="t" style="left:10.64px;top:1864.95px;font-size:28.40px;color:#444;transform:scaleX(1.1000);">32</span><span class="t" style="left:197.85px;top:1864.78px;font-size:28.60px;color:#000;transform:scaleX(1.0948);">12/08/2023</span><span class="t" style="left:520.35px;top:1864.78px;font-size:28.60px;color:#000;transform:scaleX(1.0948);">12/08/2023</span><span class="t" style="left:685.93px;top:1864.78px;font-size:28.60px;color:#000;transform:scaleX(1.0455);">Payment</span><span class="t" style="left:1010.07px;top:1864.78px;font-size:28.60px;color:#000;transform:scaleX(1.0846);">108112</span><span class="t" style="left:1311.27px;top:1864.78px;font-size:28.60px;color:#000;transform:scaleX(1.0846);">107112</span><span class="t" style="left:1812.27px;top:1864.78px;font-size:28.60px;color:#000;transform:scaleX(1.0779);">50000</span><span class="t" style="left:2067.05px;top:1864.78px;font-size:28.60px;color:#000;transform:scaleX(1.0405);">Nod Publishers</span><span class="t" style="left:2345.58px;top:1864.78px;font-size:28.60px;color:#000;transform:scaleX(1.0648);">Invoice 107112</span><div style="position:absolute;left:58.5px;top:1940.8px;width:2947.5px;height:1.4px;background:#56b6e6"></div><div style="position:absolute;left:0px;top:1940.5px;width:58.5px;height:1.2px;background:#dcdcdc"></div><span class="t" style="left:10.52px;top:1907.95px;font-size:28.40px;color:#444;transform:scaleX(1.1000);">33</span><span class="t" style="left:197.85px;top:1907.78px;font-size:28.60px;color:#000;transform:scaleX(1.0948);">12/08/2023</span><span class="t" style="left:520.35px;top:1907.78px;font-size:28.60px;color:#000;transform:scaleX(1.0948);">12/08/2023</span><span class="t" style="left:685.54px;top:1907.78px;font-size:28.60px;color:#000;transform:scaleX(1.0816);">Invoice</span><span class="t" style="left:1010.07px;top:1907.78px;font-size:28.60px;color:#000;transform:scaleX(1.0846);">108112</span><span class="t" style="left:1311.27px;top:1907.78px;font-size:28.60px;color:#000;transform:scaleX(1.0846);">107112</span><span class="t" style="left:1812.27px;top:1907.78px;font-size:28.60px;color:#000;transform:scaleX(1.0779);">50000</span><span class="t" style="left:2067.05px;top:1907.78px;font-size:28.60px;color:#000;transform:scaleX(1.0405);">Nod Publishers</span><span class="t" style="left:2345.58px;top:1907.78px;font-size:28.60px;color:#000;transform:scaleX(1.0648);">Invoice 107112</span><div style="position:absolute;left:58.5px;top:1941.5px;width:2947.5px;height:43px;background:#c0e6f5"></div><div style="position:absolute;left:58.5px;top:1983.8px;width:2947.5px;height:1.4px;background:#56b6e6"></div><div style="position:absolute;left:0px;top:1983.5px;width:58.5px;height:1.2px;background:#dcdcdc"></div><span class="t" style="left:10.29px;top:1950.95px;font-size:28.40px;color:#444;transform:scaleX(1.1000);">34</span><span class="t" style="left:197.85px;top:1950.78px;font-size:28.60px;color:#000;transform:scaleX(1.0948);">11/08/2023</span><span class="t" style="left:520.35px;top:1950.78px;font-size:28.60px;color:#000;transform:scaleX(1.0948);">11/08/2023</span><span class="t" style="left:685.93px;top:1950.78px;font-size:28.60px;color:#000;transform:scaleX(1.0455);">Payment</span><span class="t" style="left:1010.08px;top:1950.78px;font-size:28.60px;color:#000;transform:scaleX(1.0804);">108110</span><span class="t" style="left:1311.28px;top:1950.78px;font-size:28.60px;color:#000;transform:scaleX(1.0804);">107110</span><span class="t" style="left:1812.27px;top:1950.78px;font-size:28.60px;color:#000;transform:scaleX(1.0779);">50000</span><span class="t" style="left:2067.05px;top:1950.78px;font-size:28.60px;color:#000;transform:scaleX(1.0405);">Nod Publishers</span><span class="t" style="left:2345.59px;top:1950.78px;font-size:28.60px;color:#000;transform:scaleX(1.0628);">Invoice 107110</span><div style="position:absolute;left:58.5px;top:2026.8px;width:2947.5px;height:1.4px;background:#56b6e6"></div><div style="position:absolute;left:0px;top:2026.5px;width:58.5px;height:1.2px;background:#dcdcdc"></div><span class="t" style="left:10.48px;top:1993.95px;font-size:28.40px;color:#444;transform:scaleX(1.1000);">35</span><span class="t" style="left:197.85px;top:1993.78px;font-size:28.60px;color:#000;transform:scaleX(1.0948);">11/08/2023</span><span class="t" style="left:520.35px;top:1993.78px;font-size:28.60px;color:#000;transform:scaleX(1.0948);">11/08/2023</span><span class="t" style="left:685.54px;top:1993.78px;font-size:28.60px;color:#000;transform:scaleX(1.0816);">Invoice</span><span class="t" style="left:1010.08px;top:1993.78px;font-size:28.60px;color:#000;transform:scaleX(1.0804);">108110</span><span class="t" style="left:1311.28px;top:1993.78px;font-size:28.60px;color:#000;transform:scaleX(1.0804);">107110</span><span class="t" style="left:1812.27px;top:1993.78px;font-size:28.60px;color:#000;transform:scaleX(1.0779);">50000</span><span class="t" style="left:2067.05px;top:1993.78px;font-size:28.60px;color:#000;transform:scaleX(1.0405);">Nod Publishers</span><span class="t" style="left:2345.59px;top:1993.78px;font-size:28.60px;color:#000;transform:scaleX(1.0628);">Invoice 107110</span><div style="position:absolute;left:58.5px;top:2027.5px;width:2947.5px;height:43px;background:#c0e6f5"></div><div style="position:absolute;left:58.5px;top:2069.8px;width:2947.5px;height:1.4px;background:#56b6e6"></div><div style="position:absolute;left:0px;top:2069.5px;width:58.5px;height:1.2px;background:#dcdcdc"></div><span class="t" style="left:10.52px;top:2036.95px;font-size:28.40px;color:#444;transform:scaleX(1.1000);">36</span><span class="t" style="left:197.85px;top:2036.78px;font-size:28.60px;color:#000;transform:scaleX(1.0948);">12/07/2023</span><span class="t" style="left:520.35px;top:2036.78px;font-size:28.60px;color:#000;transform:scaleX(1.0948);">12/07/2023</span><span class="t" style="left:685.93px;top:2036.78px;font-size:28.60px;color:#000;transform:scaleX(1.0455);">Payment</span><span class="t" style="left:1010.08px;top:2036.78px;font-size:28.60px;color:#000;transform:scaleX(1.0829);">108099</span><span class="t" style="left:1311.28px;top:2036.78px;font-size:28.60px;color:#000;transform:scaleX(1.0829);">107099</span><span class="t" style="left:1812.27px;top:2036.78px;font-size:28.60px;color:#000;transform:scaleX(1.0779);">50000</span><span class="t" style="left:2067.05px;top:2036.78px;font-size:28.60px;color:#000;transform:scaleX(1.0405);">Nod Publishers</span><span class="t" style="left:2345.59px;top:2036.78px;font-size:28.60px;color:#000;transform:scaleX(1.0640);">Invoice 107099</span><div style="position:absolute;left:58.5px;top:2112.8px;width:2947.5px;height:1.4px;background:#56b6e6"></div><div style="position:absolute;left:0px;top:2112.5px;width:58.5px;height:1.2px;background:#dcdcdc"></div><span class="t" style="left:10.64px;top:2079.95px;font-size:28.40px;color:#444;transform:scaleX(1.1000);">37</span><span class="t" style="left:197.85px;top:2079.78px;font-size:28.60px;color:#000;transform:scaleX(1.0948);">12/07/2023</span><span class="t" style="left:520.35px;top:2079.78px;font-size:28.60px;color:#000;transform:scaleX(1.0948);">12/07/2023</span><span class="t" style="left:685.54px;top:2079.78px;font-size:28.60px;color:#000;transform:scaleX(1.0816);">Invoice</span><span class="t" style="left:1010.08px;top:2079.78px;font-size:28.60px;color:#000;transform:scaleX(1.0829);">108099</span><span class="t" style="left:1311.28px;top:2079.78px;font-size:28.60px;color:#000;transform:scaleX(1.0829);">107099</span><span class="t" style="left:1812.27px;top:2079.78px;font-size:28.60px;color:#000;transform:scaleX(1.0779);">50000</span><span class="t" style="left:2067.05px;top:2079.78px;font-size:28.60px;color:#000;transform:scaleX(1.0405);">Nod Publishers</span><span class="t" style="left:2345.59px;top:2079.78px;font-size:28.60px;color:#000;transform:scaleX(1.0640);">Invoice 107099</span><div style="position:absolute;left:58.5px;top:2113.5px;width:2947.5px;height:43px;background:#c0e6f5"></div><div style="position:absolute;left:58.5px;top:2155.8px;width:2947.5px;height:1.4px;background:#56b6e6"></div><div style="position:absolute;left:0px;top:2155.5px;width:58.5px;height:1.2px;background:#dcdcdc"></div><span class="t" style="left:10.52px;top:2122.95px;font-size:28.40px;color:#444;transform:scaleX(1.1000);">38</span><span class="t" style="left:197.85px;top:2122.78px;font-size:28.60px;color:#000;transform:scaleX(1.0948);">11/07/2023</span><span class="t" style="left:520.35px;top:2122.78px;font-size:28.60px;color:#000;transform:scaleX(1.0948);">11/07/2023</span><span class="t" style="left:685.93px;top:2122.78px;font-size:28.60px;color:#000;transform:scaleX(1.0455);">Payment</span><span class="t" style="left:1010.07px;top:2122.78px;font-size:28.60px;color:#000;transform:scaleX(1.0846);">108097</span><span class="t" style="left:1311.27px;top:2122.78px;font-size:28.60px;color:#000;transform:scaleX(1.0846);">107097</span><span class="t" style="left:1812.27px;top:2122.78px;font-size:28.60px;color:#000;transform:scaleX(1.0779);">50000</span><span class="t" style="left:2067.05px;top:2122.78px;font-size:28.60px;color:#000;transform:scaleX(1.0405);">Nod Publishers</span><span class="t" style="left:2345.58px;top:2122.78px;font-size:28.60px;color:#000;transform:scaleX(1.0648);">Invoice 107097</span><div style="position:absolute;left:58.5px;top:2198.8px;width:2947.5px;height:1.4px;background:#56b6e6"></div><div style="position:absolute;left:0px;top:2198.5px;width:58.5px;height:1.2px;background:#dcdcdc"></div><span class="t" style="left:10.56px;top:2165.95px;font-size:28.40px;color:#444;transform:scaleX(1.1000);">39</span><span class="t" style="left:197.85px;top:2165.78px;font-size:28.60px;color:#000;transform:scaleX(1.0948);">11/07/2023</span><span class="t" style="left:520.35px;top:2165.78px;font-size:28.60px;color:#000;transform:scaleX(1.0948);">11/07/2023</span><span class="t" style="left:685.54px;top:2165.78px;font-size:28.60px;color:#000;transform:scaleX(1.0816);">Invoice</span><span class="t" style="left:1010.07px;top:2165.78px;font-size:28.60px;color:#000;transform:scaleX(1.0846);">108097</span><span class="t" style="left:1311.27px;top:2165.78px;font-size:28.60px;color:#000;transform:scaleX(1.0846);">107097</span><span class="t" style="left:1812.27px;top:2165.78px;font-size:28.60px;color:#000;transform:scaleX(1.0779);">50000</span><span class="t" style="left:2067.05px;top:2165.78px;font-size:28.60px;color:#000;transform:scaleX(1.0405);">Nod Publishers</span><span class="t" style="left:2345.58px;top:2165.78px;font-size:28.60px;color:#000;transform:scaleX(1.0648);">Invoice 107097</span><div style="position:absolute;left:359px;top:608.5px;width:1.1px;height:41.7px;background:#e1e1e1"></div><div style="position:absolute;left:359px;top:694.5px;width:1.1px;height:41.7px;background:#e1e1e1"></div><div style="position:absolute;left:359px;top:780.5px;width:1.1px;height:41.7px;background:#e1e1e1"></div><div style="position:absolute;left:359px;top:866.5px;width:1.1px;height:41.7px;background:#e1e1e1"></div><div style="position:absolute;left:359px;top:952.5px;width:1.1px;height:41.7px;background:#e1e1e1"></div><div style="position:absolute;left:359px;top:1038.5px;width:1.1px;height:41.7px;background:#e1e1e1"></div><div style="position:absolute;left:359px;top:1124.5px;width:1.1px;height:41.7px;background:#e1e1e1"></div><div style="position:absolute;left:359px;top:1210.5px;width:1.1px;height:41.7px;background:#e1e1e1"></div><div style="position:absolute;left:359px;top:1296.5px;width:1.1px;height:41.7px;background:#e1e1e1"></div><div style="position:absolute;left:359px;top:1382.5px;width:1.1px;height:41.7px;background:#e1e1e1"></div><div style="position:absolute;left:359px;top:1468.5px;width:1.1px;height:41.7px;background:#e1e1e1"></div><div style="position:absolute;left:359px;top:1554.5px;width:1.1px;height:41.7px;background:#e1e1e1"></div><div style="position:absolute;left:359px;top:1640.5px;width:1.1px;height:41.7px;background:#e1e1e1"></div><div style="position:absolute;left:359px;top:1726.5px;width:1.1px;height:41.7px;background:#e1e1e1"></div><div style="position:absolute;left:359px;top:1812.5px;width:1.1px;height:41.7px;background:#e1e1e1"></div><div style="position:absolute;left:359px;top:1898.5px;width:1.1px;height:41.7px;background:#e1e1e1"></div><div style="position:absolute;left:359px;top:1984.5px;width:1.1px;height:41.7px;background:#e1e1e1"></div><div style="position:absolute;left:359px;top:2070.5px;width:1.1px;height:41.7px;background:#e1e1e1"></div><div style="position:absolute;left:359px;top:2156.5px;width:1.1px;height:41.7px;background:#e1e1e1"></div><div style="position:absolute;left:681.5px;top:608.5px;width:1.1px;height:41.7px;background:#e1e1e1"></div><div style="position:absolute;left:681.5px;top:694.5px;width:1.1px;height:41.7px;background:#e1e1e1"></div><div style="position:absolute;left:681.5px;top:780.5px;width:1.1px;height:41.7px;background:#e1e1e1"></div><div style="position:absolute;left:681.5px;top:866.5px;width:1.1px;height:41.7px;background:#e1e1e1"></div><div style="position:absolute;left:681.5px;top:952.5px;width:1.1px;height:41.7px;background:#e1e1e1"></div><div style="position:absolute;left:681.5px;top:1038.5px;width:1.1px;height:41.7px;background:#e1e1e1"></div><div style="position:absolute;left:681.5px;top:1124.5px;width:1.1px;height:41.7px;background:#e1e1e1"></div><div style="position:absolute;left:681.5px;top:1210.5px;width:1.1px;height:41.7px;background:#e1e1e1"></div><div style="position:absolute;left:681.5px;top:1296.5px;width:1.1px;height:41.7px;background:#e1e1e1"></div><div style="position:absolute;left:681.5px;top:1382.5px;width:1.1px;height:41.7px;background:#e1e1e1"></div><div style="position:absolute;left:681.5px;top:1468.5px;width:1.1px;height:41.7px;background:#e1e1e1"></div><div style="position:absolute;left:681.5px;top:1554.5px;width:1.1px;height:41.7px;background:#e1e1e1"></div><div style="position:absolute;left:681.5px;top:1640.5px;width:1.1px;height:41.7px;background:#e1e1e1"></div><div style="position:absolute;left:681.5px;top:1726.5px;width:1.1px;height:41.7px;background:#e1e1e1"></div><div style="position:absolute;left:681.5px;top:1812.5px;width:1.1px;height:41.7px;background:#e1e1e1"></div><div style="position:absolute;left:681.5px;top:1898.5px;width:1.1px;height:41.7px;background:#e1e1e1"></div><div style="position:absolute;left:681.5px;top:1984.5px;width:1.1px;height:41.7px;background:#e1e1e1"></div><div style="position:absolute;left:681.5px;top:2070.5px;width:1.1px;height:41.7px;background:#e1e1e1"></div><div style="position:absolute;left:681.5px;top:2156.5px;width:1.1px;height:41.7px;background:#e1e1e1"></div><div style="position:absolute;left:1004.5px;top:608.5px;width:1.1px;height:41.7px;background:#e1e1e1"></div><div style="position:absolute;left:1004.5px;top:694.5px;width:1.1px;height:41.7px;background:#e1e1e1"></div><div style="position:absolute;left:1004.5px;top:780.5px;width:1.1px;height:41.7px;background:#e1e1e1"></div><div style="position:absolute;left:1004.5px;top:866.5px;width:1.1px;height:41.7px;background:#e1e1e1"></div><div style="position:absolute;left:1004.5px;top:952.5px;width:1.1px;height:41.7px;background:#e1e1e1"></div><div style="position:absolute;left:1004.5px;top:1038.5px;width:1.1px;height:41.7px;background:#e1e1e1"></div><div style="position:absolute;left:1004.5px;top:1124.5px;width:1.1px;height:41.7px;background:#e1e1e1"></div><div style="position:absolute;left:1004.5px;top:1210.5px;width:1.1px;height:41.7px;background:#e1e1e1"></div><div style="position:absolute;left:1004.5px;top:1296.5px;width:1.1px;height:41.7px;background:#e1e1e1"></div><div style="position:absolute;left:1004.5px;top:1382.5px;width:1.1px;height:41.7px;background:#e1e1e1"></div><div style="position:absolute;left:1004.5px;top:1468.5px;width:1.1px;height:41.7px;background:#e1e1e1"></div><div style="position:absolute;left:1004.5px;top:1554.5px;width:1.1px;height:41.7px;background:#e1e1e1"></div><div style="position:absolute;left:1004.5px;top:1640.5px;width:1.1px;height:41.7px;background:#e1e1e1"></div><div style="position:absolute;left:1004.5px;top:1726.5px;width:1.1px;height:41.7px;background:#e1e1e1"></div><div style="position:absolute;left:1004.5px;top:1812.5px;width:1.1px;height:41.7px;background:#e1e1e1"></div><div style="position:absolute;left:1004.5px;top:1898.5px;width:1.1px;height:41.7px;background:#e1e1e1"></div><div style="position:absolute;left:1004.5px;top:1984.5px;width:1.1px;height:41.7px;background:#e1e1e1"></div><div style="position:absolute;left:1004.5px;top:2070.5px;width:1.1px;height:41.7px;background:#e1e1e1"></div><div style="position:absolute;left:1004.5px;top:2156.5px;width:1.1px;height:41.7px;background:#e1e1e1"></div><div style="position:absolute;left:1305.8px;top:608.5px;width:1.1px;height:41.7px;background:#e1e1e1"></div><div style="position:absolute;left:1305.8px;top:694.5px;width:1.1px;height:41.7px;background:#e1e1e1"></div><div style="position:absolute;left:1305.8px;top:780.5px;width:1.1px;height:41.7px;background:#e1e1e1"></div><div style="position:absolute;left:1305.8px;top:866.5px;width:1.1px;height:41.7px;background:#e1e1e1"></div><div style="position:absolute;left:1305.8px;top:952.5px;width:1.1px;height:41.7px;background:#e1e1e1"></div><div style="position:absolute;left:1305.8px;top:1038.5px;width:1.1px;height:41.7px;background:#e1e1e1"></div><div style="position:absolute;left:1305.8px;top:1124.5px;width:1.1px;height:41.7px;background:#e1e1e1"></div><div style="position:absolute;left:1305.8px;top:1210.5px;width:1.1px;height:41.7px;background:#e1e1e1"></div><div style="position:absolute;left:1305.8px;top:1296.5px;width:1.1px;height:41.7px;background:#e1e1e1"></div><div style="position:absolute;left:1305.8px;top:1382.5px;width:1.1px;height:41.7px;background:#e1e1e1"></div><div style="position:absolute;left:1305.8px;top:1468.5px;width:1.1px;height:41.7px;background:#e1e1e1"></div><div style="position:absolute;left:1305.8px;top:1554.5px;width:1.1px;height:41.7px;background:#e1e1e1"></div><div style="position:absolute;left:1305.8px;top:1640.5px;width:1.1px;height:41.7px;background:#e1e1e1"></div><div style="position:absolute;left:1305.8px;top:1726.5px;width:1.1px;height:41.7px;background:#e1e1e1"></div><div style="position:absolute;left:1305.8px;top:1812.5px;width:1.1px;height:41.7px;background:#e1e1e1"></div><div style="position:absolute;left:1305.8px;top:1898.5px;width:1.1px;height:41.7px;background:#e1e1e1"></div><div style="position:absolute;left:1305.8px;top:1984.5px;width:1.1px;height:41.7px;background:#e1e1e1"></div><div style="position:absolute;left:1305.8px;top:2070.5px;width:1.1px;height:41.7px;background:#e1e1e1"></div><div style="position:absolute;left:1305.8px;top:2156.5px;width:1.1px;height:41.7px;background:#e1e1e1"></div><div style="position:absolute;left:1806px;top:608.5px;width:1.1px;height:41.7px;background:#e1e1e1"></div><div style="position:absolute;left:1806px;top:694.5px;width:1.1px;height:41.7px;background:#e1e1e1"></div><div style="position:absolute;left:1806px;top:780.5px;width:1.1px;height:41.7px;background:#e1e1e1"></div><div style="position:absolute;left:1806px;top:866.5px;width:1.1px;height:41.7px;background:#e1e1e1"></div><div style="position:absolute;left:1806px;top:952.5px;width:1.1px;height:41.7px;background:#e1e1e1"></div><div style="position:absolute;left:1806px;top:1038.5px;width:1.1px;height:41.7px;background:#e1e1e1"></div><div style="position:absolute;left:1806px;top:1124.5px;width:1.1px;height:41.7px;background:#e1e1e1"></div><div style="position:absolute;left:1806px;top:1210.5px;width:1.1px;height:41.7px;background:#e1e1e1"></div><div style="position:absolute;left:1806px;top:1296.5px;width:1.1px;height:41.7px;background:#e1e1e1"></div><div style="position:absolute;left:1806px;top:1382.5px;width:1.1px;height:41.7px;background:#e1e1e1"></div><div style="position:absolute;left:1806px;top:1468.5px;width:1.1px;height:41.7px;background:#e1e1e1"></div><div style="position:absolute;left:1806px;top:1554.5px;width:1.1px;height:41.7px;background:#e1e1e1"></div><div style="position:absolute;left:1806px;top:1640.5px;width:1.1px;height:41.7px;background:#e1e1e1"></div><div style="position:absolute;left:1806px;top:1726.5px;width:1.1px;height:41.7px;background:#e1e1e1"></div><div style="position:absolute;left:1806px;top:1812.5px;width:1.1px;height:41.7px;background:#e1e1e1"></div><div style="position:absolute;left:1806px;top:1898.5px;width:1.1px;height:41.7px;background:#e1e1e1"></div><div style="position:absolute;left:1806px;top:1984.5px;width:1.1px;height:41.7px;background:#e1e1e1"></div><div style="position:absolute;left:1806px;top:2070.5px;width:1.1px;height:41.7px;background:#e1e1e1"></div><div style="position:absolute;left:1806px;top:2156.5px;width:1.1px;height:41.7px;background:#e1e1e1"></div><div style="position:absolute;left:2063px;top:608.5px;width:1.1px;height:41.7px;background:#e1e1e1"></div><div style="position:absolute;left:2063px;top:694.5px;width:1.1px;height:41.7px;background:#e1e1e1"></div><div style="position:absolute;left:2063px;top:780.5px;width:1.1px;height:41.7px;background:#e1e1e1"></div><div style="position:absolute;left:2063px;top:866.5px;width:1.1px;height:41.7px;background:#e1e1e1"></div><div style="position:absolute;left:2063px;top:952.5px;width:1.1px;height:41.7px;background:#e1e1e1"></div><div style="position:absolute;left:2063px;top:1038.5px;width:1.1px;height:41.7px;background:#e1e1e1"></div><div style="position:absolute;left:2063px;top:1124.5px;width:1.1px;height:41.7px;background:#e1e1e1"></div><div style="position:absolute;left:2063px;top:1210.5px;width:1.1px;height:41.7px;background:#e1e1e1"></div><div style="position:absolute;left:2063px;top:1296.5px;width:1.1px;height:41.7px;background:#e1e1e1"></div><div style="position:absolute;left:2063px;top:1382.5px;width:1.1px;height:41.7px;background:#e1e1e1"></div><div style="position:absolute;left:2063px;top:1468.5px;width:1.1px;height:41.7px;background:#e1e1e1"></div><div style="position:absolute;left:2063px;top:1554.5px;width:1.1px;height:41.7px;background:#e1e1e1"></div><div style="position:absolute;left:2063px;top:1640.5px;width:1.1px;height:41.7px;background:#e1e1e1"></div><div style="position:absolute;left:2063px;top:1726.5px;width:1.1px;height:41.7px;background:#e1e1e1"></div><div style="position:absolute;left:2063px;top:1812.5px;width:1.1px;height:41.7px;background:#e1e1e1"></div><div style="position:absolute;left:2063px;top:1898.5px;width:1.1px;height:41.7px;background:#e1e1e1"></div><div style="position:absolute;left:2063px;top:1984.5px;width:1.1px;height:41.7px;background:#e1e1e1"></div><div style="position:absolute;left:2063px;top:2070.5px;width:1.1px;height:41.7px;background:#e1e1e1"></div><div style="position:absolute;left:2063px;top:2156.5px;width:1.1px;height:41.7px;background:#e1e1e1"></div><div style="position:absolute;left:2341.7px;top:608.5px;width:1.1px;height:41.7px;background:#e1e1e1"></div><div style="position:absolute;left:2341.7px;top:694.5px;width:1.1px;height:41.7px;background:#e1e1e1"></div><div style="position:absolute;left:2341.7px;top:780.5px;width:1.1px;height:41.7px;background:#e1e1e1"></div><div style="position:absolute;left:2341.7px;top:866.5px;width:1.1px;height:41.7px;background:#e1e1e1"></div><div style="position:absolute;left:2341.7px;top:952.5px;width:1.1px;height:41.7px;background:#e1e1e1"></div><div style="position:absolute;left:2341.7px;top:1038.5px;width:1.1px;height:41.7px;background:#e1e1e1"></div><div style="position:absolute;left:2341.7px;top:1124.5px;width:1.1px;height:41.7px;background:#e1e1e1"></div><div style="position:absolute;left:2341.7px;top:1210.5px;width:1.1px;height:41.7px;background:#e1e1e1"></div><div style="position:absolute;left:2341.7px;top:1296.5px;width:1.1px;height:41.7px;background:#e1e1e1"></div><div style="position:absolute;left:2341.7px;top:1382.5px;width:1.1px;height:41.7px;background:#e1e1e1"></div><div style="position:absolute;left:2341.7px;top:1468.5px;width:1.1px;height:41.7px;background:#e1e1e1"></div><div style="position:absolute;left:2341.7px;top:1554.5px;width:1.1px;height:41.7px;background:#e1e1e1"></div><div style="position:absolute;left:2341.7px;top:1640.5px;width:1.1px;height:41.7px;background:#e1e1e1"></div><div style="position:absolute;left:2341.7px;top:1726.5px;width:1.1px;height:41.7px;background:#e1e1e1"></div><div style="position:absolute;left:2341.7px;top:1812.5px;width:1.1px;height:41.7px;background:#e1e1e1"></div><div style="position:absolute;left:2341.7px;top:1898.5px;width:1.1px;height:41.7px;background:#e1e1e1"></div><div style="position:absolute;left:2341.7px;top:1984.5px;width:1.1px;height:41.7px;background:#e1e1e1"></div><div style="position:absolute;left:2341.7px;top:2070.5px;width:1.1px;height:41.7px;background:#e1e1e1"></div><div style="position:absolute;left:2341.7px;top:2156.5px;width:1.1px;height:41.7px;background:#e1e1e1"></div><div style="position:absolute;left:2621px;top:608.5px;width:1.1px;height:41.7px;background:#e1e1e1"></div><div style="position:absolute;left:2621px;top:694.5px;width:1.1px;height:41.7px;background:#e1e1e1"></div><div style="position:absolute;left:2621px;top:780.5px;width:1.1px;height:41.7px;background:#e1e1e1"></div><div style="position:absolute;left:2621px;top:866.5px;width:1.1px;height:41.7px;background:#e1e1e1"></div><div style="position:absolute;left:2621px;top:952.5px;width:1.1px;height:41.7px;background:#e1e1e1"></div><div style="position:absolute;left:2621px;top:1038.5px;width:1.1px;height:41.7px;background:#e1e1e1"></div><div style="position:absolute;left:2621px;top:1124.5px;width:1.1px;height:41.7px;background:#e1e1e1"></div><div style="position:absolute;left:2621px;top:1210.5px;width:1.1px;height:41.7px;background:#e1e1e1"></div><div style="position:absolute;left:2621px;top:1296.5px;width:1.1px;height:41.7px;background:#e1e1e1"></div><div style="position:absolute;left:2621px;top:1382.5px;width:1.1px;height:41.7px;background:#e1e1e1"></div><div style="position:absolute;left:2621px;top:1468.5px;width:1.1px;height:41.7px;background:#e1e1e1"></div><div style="position:absolute;left:2621px;top:1554.5px;width:1.1px;height:41.7px;background:#e1e1e1"></div><div style="position:absolute;left:2621px;top:1640.5px;width:1.1px;height:41.7px;background:#e1e1e1"></div><div style="position:absolute;left:2621px;top:1726.5px;width:1.1px;height:41.7px;background:#e1e1e1"></div><div style="position:absolute;left:2621px;top:1812.5px;width:1.1px;height:41.7px;background:#e1e1e1"></div><div style="position:absolute;left:2621px;top:1898.5px;width:1.1px;height:41.7px;background:#e1e1e1"></div><div style="position:absolute;left:2621px;top:1984.5px;width:1.1px;height:41.7px;background:#e1e1e1"></div><div style="position:absolute;left:2621px;top:2070.5px;width:1.1px;height:41.7px;background:#e1e1e1"></div><div style="position:absolute;left:2621px;top:2156.5px;width:1.1px;height:41.7px;background:#e1e1e1"></div><div style="position:absolute;left:2989.3px;top:608.5px;width:1.1px;height:41.7px;background:#e1e1e1"></div><div style="position:absolute;left:2989.3px;top:694.5px;width:1.1px;height:41.7px;background:#e1e1e1"></div><div style="position:absolute;left:2989.3px;top:780.5px;width:1.1px;height:41.7px;background:#e1e1e1"></div><div style="position:absolute;left:2989.3px;top:866.5px;width:1.1px;height:41.7px;background:#e1e1e1"></div><div style="position:absolute;left:2989.3px;top:952.5px;width:1.1px;height:41.7px;background:#e1e1e1"></div><div style="position:absolute;left:2989.3px;top:1038.5px;width:1.1px;height:41.7px;background:#e1e1e1"></div><div style="position:absolute;left:2989.3px;top:1124.5px;width:1.1px;height:41.7px;background:#e1e1e1"></div><div style="position:absolute;left:2989.3px;top:1210.5px;width:1.1px;height:41.7px;background:#e1e1e1"></div><div style="position:absolute;left:2989.3px;top:1296.5px;width:1.1px;height:41.7px;background:#e1e1e1"></div><div style="position:absolute;left:2989.3px;top:1382.5px;width:1.1px;height:41.7px;background:#e1e1e1"></div><div style="position:absolute;left:2989.3px;top:1468.5px;width:1.1px;height:41.7px;background:#e1e1e1"></div><div style="position:absolute;left:2989.3px;top:1554.5px;width:1.1px;height:41.7px;background:#e1e1e1"></div><div style="position:absolute;left:2989.3px;top:1640.5px;width:1.1px;height:41.7px;background:#e1e1e1"></div><div style="position:absolute;left:2989.3px;top:1726.5px;width:1.1px;height:41.7px;background:#e1e1e1"></div><div style="position:absolute;left:2989.3px;top:1812.5px;width:1.1px;height:41.7px;background:#e1e1e1"></div><div style="position:absolute;left:2989.3px;top:1898.5px;width:1.1px;height:41.7px;background:#e1e1e1"></div><div style="position:absolute;left:2989.3px;top:1984.5px;width:1.1px;height:41.7px;background:#e1e1e1"></div><div style="position:absolute;left:2989.3px;top:2070.5px;width:1.1px;height:41.7px;background:#e1e1e1"></div><div style="position:absolute;left:2989.3px;top:2156.5px;width:1.1px;height:41.7px;background:#e1e1e1"></div><div style="position:absolute;left:58px;top:522px;width:1.1px;height:1647px;background:#d4d4d4"></div><div style="position:absolute;left:56.2px;top:562.5px;width:305.6px;height:48.2px;border:3px solid #1e6e42;box-sizing:border-box"></div><div style="position:absolute;left:0px;top:564.7px;width:56.2px;height:2.4px;background:#9e9e9e"></div><div style="position:absolute;left:59.2px;top:564.7px;width:299.6px;height:2.4px;background:#9e9e9e"></div><div style="position:absolute;left:361.8px;top:564.7px;width:2644.2px;height:2.4px;background:#9e9e9e"></div><span class="t" style="left:18.50px;top:531.85px;font-size:28.40px;color:#444;transform:scaleX(1.1000);">1</span><div style="position:absolute;left:0px;top:521.5px;width:58.5px;height:1.2px;background:#dcdcdc"></div><div style="position:absolute;left:354px;top:603.2px;width:7.6px;height:7.6px;background:#1e6e42;border:1.2px solid #fff;box-sizing:content-box"></div><svg style="position:absolute;left:0;top:0" width="3006" height="2291" fill="none"><path d="M55 485.500V519H20.500z" fill="#dcdcdc"/><path d="M332.0 541.800h15.200l-7.600 7.800z" fill="#6a6a6a"/><path d="M654.5 541.800h15.200l-7.600 7.800z" fill="#6a6a6a"/><path d="M977.5 541.800h15.200l-7.600 7.800z" fill="#6a6a6a"/><path d="M1278.8 541.800h15.200l-7.600 7.800z" fill="#6a6a6a"/><path d="M1779.0 541.800h15.200l-7.600 7.800z" fill="#6a6a6a"/><path d="M2036.0 541.800h15.200l-7.600 7.800z" fill="#6a6a6a"/><path d="M2314.7 541.800h15.200l-7.600 7.800z" fill="#6a6a6a"/><path d="M2594.0 541.800h15.200l-7.600 7.800z" fill="#6a6a6a"/><path d="M2962.3 541.800h15.200l-7.600 7.800z" fill="#6a6a6a"/><path d="M1006 566.0h13.500l-13.500 13.500z" fill="#107c10"/><path d="M1307.2 566.0h13.500l-13.500 13.500z" fill="#107c10"/><path d="M1807.3 566.0h13.500l-13.500 13.500z" fill="#107c10"/><path d="M1006 609.0h13.500l-13.500 13.500z" fill="#107c10"/><path d="M1307.2 609.0h13.500l-13.500 13.500z" fill="#107c10"/><path d="M1807.3 609.0h13.500l-13.500 13.500z" fill="#107c10"/><path d="M1006 652.0h13.500l-13.500 13.500z" fill="#107c10"/><path d="M1307.2 652.0h13.500l-13.500 13.500z" fill="#107c10"/><path d="M1807.3 652.0h13.500l-13.500 13.500z" fill="#107c10"/><path d="M1006 695.0h13.500l-13.500 13.500z" fill="#107c10"/><path d="M1307.2 695.0h13.500l-13.500 13.500z" fill="#107c10"/><path d="M1807.3 695.0h13.500l-13.500 13.500z" fill="#107c10"/><path d="M1006 738.0h13.500l-13.500 13.500z" fill="#107c10"/><path d="M1307.2 738.0h13.500l-13.500 13.500z" fill="#107c10"/><path d="M1807.3 738.0h13.500l-13.500 13.500z" fill="#107c10"/><path d="M1006 781.0h13.500l-13.500 13.500z" fill="#107c10"/><path d="M1307.2 781.0h13.500l-13.500 13.500z" fill="#107c10"/><path d="M1807.3 781.0h13.500l-13.500 13.500z" fill="#107c10"/><path d="M1006 824.0h13.500l-13.500 13.500z" fill="#107c10"/><path d="M1307.2 824.0h13.500l-13.500 13.500z" fill="#107c10"/><path d="M1807.3 824.0h13.500l-13.500 13.500z" fill="#107c10"/><path d="M1006 867.0h13.500l-13.500 13.500z" fill="#107c10"/><path d="M1307.2 867.0h13.500l-13.500 13.500z" fill="#107c10"/><path d="M1807.3 867.0h13.500l-13.500 13.500z" fill="#107c10"/><path d="M1006 910.0h13.500l-13.500 13.500z" fill="#107c10"/><path d="M1307.2 910.0h13.500l-13.500 13.500z" fill="#107c10"/><path d="M1807.3 910.0h13.500l-13.500 13.500z" fill="#107c10"/><path d="M1006 953.0h13.500l-13.500 13.500z" fill="#107c10"/><path d="M1307.2 953.0h13.500l-13.500 13.500z" fill="#107c10"/><path d="M1807.3 953.0h13.500l-13.500 13.500z" fill="#107c10"/><path d="M1006 996.0h13.500l-13.500 13.500z" fill="#107c10"/><path d="M1307.2 996.0h13.500l-13.500 13.500z" fill="#107c10"/><path d="M1807.3 996.0h13.500l-13.500 13.500z" fill="#107c10"/><path d="M1006 1039.0h13.500l-13.500 13.500z" fill="#107c10"/><path d="M1307.2 1039.0h13.500l-13.500 13.500z" fill="#107c10"/><path d="M1807.3 1039.0h13.500l-13.500 13.500z" fill="#107c10"/><path d="M1006 1082.0h13.500l-13.500 13.500z" fill="#107c10"/><path d="M1307.2 1082.0h13.500l-13.500 13.500z" fill="#107c10"/><path d="M1807.3 1082.0h13.500l-13.500 13.500z" fill="#107c10"/><path d="M1006 1125.0h13.500l-13.500 13.500z" fill="#107c10"/><path d="M1307.2 1125.0h13.500l-13.500 13.500z" fill="#107c10"/><path d="M1807.3 1125.0h13.500l-13.500 13.500z" fill="#107c10"/><path d="M1006 1168.0h13.500l-13.500 13.500z" fill="#107c10"/><path d="M1307.2 1168.0h13.500l-13.500 13.500z" fill="#107c10"/><path d="M1807.3 1168.0h13.500l-13.500 13.500z" fill="#107c10"/><path d="M1006 1211.0h13.500l-13.500 13.500z" fill="#107c10"/><path d="M1307.2 1211.0h13.500l-13.500 13.500z" fill="#107c10"/><path d="M1807.3 1211.0h13.500l-13.500 13.500z" fill="#107c10"/><path d="M1006 1254.0h13.500l-13.500 13.500z" fill="#107c10"/><path d="M1307.2 1254.0h13.500l-13.500 13.500z" fill="#107c10"/><path d="M1807.3 1254.0h13.500l-13.500 13.500z" fill="#107c10"/><path d="M1006 1297.0h13.500l-13.500 13.500z" fill="#107c10"/><path d="M1307.2 1297.0h13.500l-13.500 13.500z" fill="#107c10"/><path d="M1807.3 1297.0h13.500l-13.500 13.500z" fill="#107c10"/><path d="M1006 1340.0h13.500l-13.500 13.500z" fill="#107c10"/><path d="M1307.2 1340.0h13.500l-13.500 13.500z" fill="#107c10"/><path d="M1807.3 1340.0h13.500l-13.500 13.500z" fill="#107c10"/><path d="M1006 1383.0h13.500l-13.500 13.500z" fill="#107c10"/><path d="M1307.2 1383.0h13.500l-13.500 13.500z" fill="#107c10"/><path d="M1807.3 1383.0h13.500l-13.500 13.500z" fill="#107c10"/><path d="M1006 1426.0h13.500l-13.500 13.500z" fill="#107c10"/><path d="M1307.2 1426.0h13.500l-13.500 13.500z" fill="#107c10"/><path d="M1807.3 1426.0h13.500l-13.500 13.500z" fill="#107c10"/><path d="M1307.2 1469.0h13.500l-13.500 13.500z" fill="#107c10"/><path d="M1807.3 1469.0h13.500l-13.500 13.500z" fill="#107c10"/><path d="M1006 1512.0h13.500l-13.500 13.500z" fill="#107c10"/><path d="M1307.2 1512.0h13.500l-13.500 13.500z" fill="#107c10"/><path d="M1807.3 1512.0h13.500l-13.500 13.500z" fill="#107c10"/><path d="M1006 1555.0h13.500l-13.500 13.500z" fill="#107c10"/><path d="M1307.2 1555.0h13.500l-13.500 13.500z" fill="#107c10"/><path d="M1807.3 1555.0h13.500l-13.500 13.500z" fill="#107c10"/><path d="M1006 1598.0h13.500l-13.500 13.500z" fill="#107c10"/><path d="M1307.2 1598.0h13.500l-13.500 13.500z" fill="#107c10"/><path d="M1006 1641.0h13.500l-13.500 13.500z" fill="#107c10"/><path d="M1307.2 1641.0h13.500l-13.500 13.500z" fill="#107c10"/><path d="M1807.3 1641.0h13.500l-13.500 13.500z" fill="#107c10"/><path d="M1006 1684.0h13.500l-13.500 13.500z" fill="#107c10"/><path d="M1307.2 1684.0h13.500l-13.500 13.500z" fill="#107c10"/><path d="M1807.3 1684.0h13.500l-13.500 13.500z" fill="#107c10"/><path d="M1006 1727.0h13.500l-13.500 13.500z" fill="#107c10"/><path d="M1307.2 1727.0h13.500l-13.500 13.500z" fill="#107c10"/><path d="M1807.3 1727.0h13.500l-13.500 13.500z" fill="#107c10"/><path d="M1006 1770.0h13.500l-13.500 13.500z" fill="#107c10"/><path d="M1307.2 1770.0h13.500l-13.500 13.500z" fill="#107c10"/><path d="M1807.3 1770.0h13.500l-13.500 13.500z" fill="#107c10"/><path d="M1006 1813.0h13.500l-13.500 13.500z" fill="#107c10"/><path d="M1307.2 1813.0h13.500l-13.500 13.500z" fill="#107c10"/><path d="M1807.3 1813.0h13.500l-13.500 13.500z" fill="#107c10"/><path d="M1006 1856.0h13.500l-13.500 13.500z" fill="#107c10"/><path d="M1307.2 1856.0h13.500l-13.500 13.500z" fill="#107c10"/><path d="M1807.3 1856.0h13.500l-13.500 13.500z" fill="#107c10"/><path d="M1006 1899.0h13.500l-13.500 13.500z" fill="#107c10"/><path d="M1307.2 1899.0h13.500l-13.500 13.500z" fill="#107c10"/><path d="M1807.3 1899.0h13.500l-13.500 13.500z" fill="#107c10"/><path d="M1006 1942.0h13.500l-13.500 13.500z" fill="#107c10"/><path d="M1307.2 1942.0h13.500l-13.500 13.500z" fill="#107c10"/><path d="M1807.3 1942.0h13.500l-13.500 13.500z" fill="#107c10"/><path d="M1006 1985.0h13.500l-13.500 13.500z" fill="#107c10"/><path d="M1307.2 1985.0h13.500l-13.500 13.500z" fill="#107c10"/><path d="M1807.3 1985.0h13.500l-13.500 13.500z" fill="#107c10"/><path d="M1006 2028.0h13.500l-13.500 13.500z" fill="#107c10"/><path d="M1307.2 2028.0h13.500l-13.500 13.500z" fill="#107c10"/><path d="M1807.3 2028.0h13.500l-13.500 13.500z" fill="#107c10"/><path d="M1006 2071.0h13.500l-13.500 13.500z" fill="#107c10"/><path d="M1307.2 2071.0h13.500l-13.500 13.500z" fill="#107c10"/><path d="M1807.3 2071.0h13.500l-13.500 13.500z" fill="#107c10"/><path d="M1006 2114.0h13.500l-13.500 13.500z" fill="#107c10"/><path d="M1307.2 2114.0h13.500l-13.500 13.500z" fill="#107c10"/><path d="M1807.3 2114.0h13.500l-13.500 13.500z" fill="#107c10"/><path d="M1006 2157.0h13.500l-13.500 13.500z" fill="#107c10"/><path d="M1307.2 2157.0h13.500l-13.500 13.500z" fill="#107c10"/><path d="M1807.3 2157.0h13.500l-13.500 13.500z" fill="#107c10"/></svg></div>
<svg style="position:absolute;left:0;top:0;pointer-events:none" width="3836" height="2291" fill="none"><g stroke="#b0b0b0" stroke-width="2.300" stroke-linecap="round" stroke-linejoin="round" fill="none"><path d="M302.500 428l25 25M327.500 428l-25 25"/><path d="M352 439.500l12 12l22-23.500"/></g></svg>
<!-- part_pane -->
<div style="position:absolute;left:3006px;top:480px;width:43px;height:1761px;background:linear-gradient(180deg,#ece5e6,#ebe6e6)"></div>
<div style="position:absolute;left:3009px;top:480px;width:38px;height:1690px;background:#f5f5f5;border-radius:19px"></div>
<div style="position:absolute;left:3019px;top:518px;width:18px;height:144px;background:#707070;border-radius:9px"></div>
<div style="position:absolute;left:3049px;top:480px;width:787px;height:1761px;background:#f0f0f0;border-left:1.5px solid #d6d3d3;box-sizing:border-box"></div>
<span class="t" style="left:3137.00px;top:506.66px;font-size:48.00px;color:#2a2a2a;transform:scaleX(0.9580);-webkit-text-stroke:.6px #f0f0f0;">Copilot (Preview)</span>
<div style="position:absolute;left:3070px;top:575.3px;width:745.5px;height:1641.5px;background:#ecebea;border:2px solid #cfcfcf;box-sizing:border-box"></div>
<div style="position:absolute;left:3100px;top:598.8px;width:670px;height:11px;background:linear-gradient(180deg,rgba(0,0,0,.07),rgba(0,0,0,.02) 60%,rgba(0,0,0,0));-webkit-mask-image:linear-gradient(90deg,transparent,#000 9%,#000 94%,transparent);mask-image:linear-gradient(90deg,transparent,#000 9%,#000 94%,transparent)"></div>
<div style="position:absolute;left:3791px;top:600px;width:23px;height:1133px;background:#f1f1f1;border-radius:11px"></div>
<div style="position:absolute;left:3795.3px;top:1140px;width:15.5px;height:465px;background:#5f5f5f;border-radius:8px"></div>
<div style="position:absolute;left:3237px;top:618px;width:517.5px;height:143px;background:#d3e9db;border-radius:14px"></div>
<span class="t" style="left:3264.92px;top:653.67px;font-size:31.80px;color:#2e2e2e;transform:scaleX(0.9894);">Are there any outliers in my</span>
<span class="t" style="left:3263.70px;top:698.27px;font-size:31.80px;color:#2e2e2e;transform:scaleX(0.9601);">data?</span>
<div style="position:absolute;left:3108px;top:785px;width:647px;height:752px;background:#fff;border-radius:14px;box-shadow:0 2px 5px rgba(0,0,0,.22),0 0 2px rgba(0,0,0,.12)"></div>
<span class="t" style="left:3134.14px;top:819.58px;font-size:32.50px;color:#242424;transform:scaleX(0.9711);font-weight:700;">'Original Amount' has outliers at</span>
<span class="t" style="left:3134.14px;top:865.08px;font-size:32.50px;color:#242424;transform:scaleX(0.9704);font-weight:700;">'Posting Date':</span>
<span class="t" style="left:3357.12px;top:865.08px;font-size:32.50px;color:#ae5a26;transform:scaleX(1.0616);font-weight:700;">07/03/2024</span>
<span class="t" style="left:3529.00px;top:865.08px;font-size:32.50px;color:#242424;transform:scaleX(1.3187);font-weight:700;">,</span>
<span class="t" style="left:3547.44px;top:865.08px;font-size:32.50px;color:#ae5a26;transform:scaleX(1.0621);font-weight:700;">11/03/2024</span>
<span class="t" style="left:3134.85px;top:909.88px;font-size:32.50px;color:#242424;transform:scaleX(0.9787);font-weight:700;">and</span>
<span class="t" style="left:3199.15px;top:909.88px;font-size:32.50px;color:#ae5a26;transform:scaleX(1.0590);font-weight:700;">13/03/2024</span>
<span class="t" style="left:3371.05px;top:909.88px;font-size:32.50px;color:#242424;transform:scaleX(1.2524);font-weight:700;">.</span>
<span class="t" style="left:3134.59px;top:962.16px;font-size:26.50px;color:#3a3a3a;transform:scaleX(1.0129);">Sum of Original Amount (Thousands)</span>
<div style="position:absolute;left:3135.6px;top:1023.8px;width:591.5px;height:299.2px;background:#fff;border:1.9px solid #d8d8d8;box-sizing:border-box;border-radius:2px"></div>
<span class="t" style="left:3399.38px;top:1046.59px;font-size:26.00px;color:#595959;transform:scaleX(0.9424);">Posting Date</span>
<span class="t" style="left:3174.08px;top:1084.55px;font-size:22.50px;color:#595959;transform:scaleX(0.9300);">0.00</span>
<span class="t" style="left:3167.11px;top:1135.55px;font-size:22.50px;color:#595959;transform:scaleX(0.9300);">-5.00</span>
<span class="t" style="left:3155.48px;top:1186.25px;font-size:22.50px;color:#595959;transform:scaleX(0.9300);">-10.00</span>
<span class="t" style="left:3155.48px;top:1238.25px;font-size:22.50px;color:#595959;transform:scaleX(0.9300);">-15.00</span>
<span class="t" style="left:3155.48px;top:1289.05px;font-size:22.50px;color:#595959;transform:scaleX(0.9300);">-20.00</span>
<div style="position:absolute;left:3144.6px;top:1354px;width:323.5px;height:65px;background:#fff;border:1.9px solid #c6c6c6;border-radius:7px;box-sizing:border-box"></div>
<span class="t" style="left:3213.93px;top:1374.63px;font-size:27.60px;color:#242424;transform:scaleX(0.9728);">Add to a new sheet</span>
<span class="t" style="left:3135.54px;top:1462.96px;font-size:23.20px;color:#6e6e6e;transform:scaleX(0.9742);">AI-generated content may be incorrect</span>
<div style="position:absolute;left:3100px;top:1550px;width:665px;height:183px;overflow:hidden"><div style="position:absolute;left:8px;top:8.7px;width:647.5px;height:300px;background:#fff;border-radius:14px;box-shadow:0 2px 5px rgba(0,0,0,.22),0 0 2px rgba(0,0,0,.12)"></div></div>
<span class="t" style="left:3134.90px;top:1595.67px;font-size:31.80px;color:#242424;transform:scaleX(0.9783);">Yes, there are outliers in the 'Original</span>
<span class="t" style="left:3135.52px;top:1640.17px;font-size:31.80px;color:#242424;transform:scaleX(1.0040);">Amount' column at 'Posting Date':</span>
<span class="t" style="left:3134.33px;top:1685.17px;font-size:31.80px;color:#242424;transform:scaleX(1.0021);">07/03/2024, 11/03/2024 and 13/03/2024.</span>
<div style="position:absolute;left:3423.6px;top:1755px;width:345.5px;height:65px;border:2px solid #a3d3b1;border-radius:15px;box-sizing:border-box;background:#ecebea"></div>
<span class="t" style="left:3442.48px;top:1775.75px;font-size:26.40px;color:#242424;transform:scaleX(0.9976);">Can I see another insight?</span>
<div style="position:absolute;left:3372px;top:1840px;width:307.6px;height:65px;border:2px solid #a3d3b1;border-radius:15px;box-sizing:border-box;background:#ecebea"></div>
<span class="t" style="left:3390.93px;top:1860.75px;font-size:26.40px;color:#242424;transform:scaleX(1.0462);">Add all insights to grid</span>
<div style="position:absolute;left:3699.9px;top:1840px;width:69.2px;height:65px;border:2px solid #a3d3b1;border-radius:15px;box-sizing:border-box;background:#ecebea"></div>
<div style="position:absolute;left:3108.8px;top:1916px;width:669px;height:254px;background:#fff;border:1.5px solid #d1d1d1;border-radius:15px;box-sizing:border-box"></div>
<span class="t" style="left:3146.72px;top:1961.84px;font-size:31.60px;color:#b9b9b9;transform:scaleX(0.9873);">Ask a question or make a request about</span>
<span class="t" style="left:3145.45px;top:2006.84px;font-size:31.60px;color:#b9b9b9;">data in a table</span>
<span class="t" style="left:3145.88px;top:2092.70px;font-size:21.50px;color:#707070;transform:scaleX(1.0644);">0/2000</span>
<svg style="position:absolute;left:0;top:0;pointer-events:none" width="3836" height="2291" fill="none"><path d="M3028 493.500l8.500 11.500h-17z" fill="#707070" stroke="#707070" stroke-width="3" stroke-linejoin="round"/>
<path d="M3028 2156.500l8.500-10.500h-17z" fill="#707070" stroke="#707070" stroke-width="3" stroke-linejoin="round"/>
<defs><linearGradient id="cg1" x1="0" y1="0" x2="0" y2="1"><stop offset="0" stop-color="#1fa6f2"/><stop offset=".35" stop-color="#1b8ad6"/><stop offset=".7" stop-color="#7fb83a"/><stop offset="1" stop-color="#ffc800"/></linearGradient>
<linearGradient id="cg2" x1="0" y1="0" x2="0" y2="1"><stop offset="0" stop-color="#a050f0"/><stop offset=".45" stop-color="#ee5091"/><stop offset="1" stop-color="#ffa040"/></linearGradient>
<linearGradient id="cg3" x1="0" y1="0" x2="1" y2="1"><stop offset="0" stop-color="#0a4fd0"/><stop offset="1" stop-color="#2a7de0"/></linearGradient>
<linearGradient id="cg4" x1="0" y1="0" x2="1" y2="1"><stop offset="0" stop-color="#ff7a3a"/><stop offset="1" stop-color="#d83030"/></linearGradient></defs>
<path d="M3096 506h8c4.500 0 6.500 2.500 7.500 6l1.700 6h-10.500z" fill="url(#cg3)"/>
<path d="M3086 506h12c5 0 6.300 3 5.200 7l-6.200 22c-1 3.500-3 4.500-6.500 4.500h-11c-5 0-7.500-3-6.300-8l4.300-16c1.500-6 4-9.500 8.500-9.500z" fill="url(#cg1)"/>
<path d="M3098.500 551h-8c-4.500 0-6.500-2.500-7.500-6l-1.700-5.500h10.500z" fill="url(#cg4)"/>
<path d="M3108.500 551h-12c-5 0-6.300-3-5.200-7l6.200-22c1-3.500 3-4.500 6.500-4.500h11c5 0 7.500 3 6.300 8l-4.300 16c-1.500 6-4 9.500-8.500 9.500z" fill="url(#cg2)"/>
<path d="M3100.800 519.500h-2c-2 0-3 1-3.600 3l-3.800 13.500c-.4 1.500 0 2 1.500 2h2c2 0 3-1 3.600-3l3.800-13.500c.4-1.500 0-2-1.500-2z" fill="#f3f3f3"/>
<g stroke="#242424" stroke-width="2.500" fill="none" stroke-linecap="round" stroke-linejoin="round"><path d="M3705.500 526l14.500 14.500l14.500-14.500"/><path d="M3782.500 522l21 21M3803.500 522l-21 21"/></g>
<path d="M3234 1145.300H3704.500M3234 1196H3704.500M3234 1246.600H3704.500M3234 1297.800H3704.500M3672 1092.600H3704.500" stroke="#eeeeee" stroke-width="2.200"/>
<path d="M3234 1092.500H3671.500" stroke="#d4d4d4" stroke-width="3.200"/>
<path d="M3671 1093l1.500 42l3.500-30l4.500 0l6 128l3-124l3.500 0l3.500 133l5-122l2 4l1.500 9" stroke="#d6d6d6" stroke-width="3.800" fill="none" stroke-linejoin="round"/>
<circle cx="3675.500" cy="1148.800" r="9.200" fill="#db7a40" stroke="#fff" stroke-width="3.200"/><circle cx="3688" cy="1246.500" r="9.200" fill="#db7a40" stroke="#fff" stroke-width="3.200"/><circle cx="3697" cy="1242.600" r="9.200" fill="#db7a40" stroke="#fff" stroke-width="3.200"/>
<path d="M3169 1386.500h25M3181.500 1374v25" stroke="#242424" stroke-width="2.600" stroke-linecap="round"/>
<g stroke="#242424" stroke-width="2.300" fill="none" stroke-linecap="round" stroke-linejoin="round">
<path d="M3638 1471c3-3 5-6.500 5.500-10c.3-2 3.200-2.500 4.500 0c1.200 2.500 .5 6-.8 9h4.800c3 0 4.500 2.500 3.800 5l-2.500 9c-.8 3-3 4.500-6 4l-10-2c-3-.6-4.500-1.500-5.200-4l-1.600-5c-.8-2.500 .5-4.500 3-5z"/>
<path d="M3705.500 1477c-3 3-5 6.500-5.500 10c-.3 2-3.200 2.500-4.500 0c-1.200-2.500-.5-6 .8-9h-4.800c-3 0-4.500-2.500-3.800-5l2.500-9c.8-3 3-4.500 6-4l10 2c3 .6 4.500 1.500 5.200 4l1.600 5c.8 2.500-.5 4.500-3 5z"/></g>
<g stroke="#242424" stroke-width="2.500" fill="none" stroke-linecap="round" stroke-linejoin="round"><path d="M3744.500 1867.500a11 11 0 1 0 .8 8"/><path d="M3745.500 1860.500v7.500h-7.500"/></g>
<g stroke="#3b3b3b" stroke-width="2.700" fill="none" stroke-linecap="round" stroke-linejoin="round"><path d="M3584.300 2109.300V2084a4 4 0 0 0-4-4H3559a4 4 0 0 0-4 4V2110.500a4 4 0 0 0 4 4H3584.300"/><path d="M3556 2109.300H3584.300"/><rect x="3561" y="2085.500" width="16.500" height="5.500" rx="1.800"/>
<rect x="3645" y="2079.500" width="13.500" height="23.500" rx="6.700"/><path d="M3639.500 2096.500a12.300 12.300 0 0 0 24.600 0M3651.800 2109v5.500"/></g>
<path d="M3604.700 2061V2132" stroke="#d2d2d2" stroke-width="2"/>
<path d="M3715.500 2080.500l34 16.500l-34 17l6-17zM3721.500 2097h14" stroke="#bdbdbd" stroke-width="2.600" fill="none" stroke-linejoin="round" stroke-linecap="round"/></svg>
<!-- part_bottom -->
<div style="position:absolute;left:0px;top:2168.5px;width:3049px;height:72.5px;background:linear-gradient(90deg,#e6e6e6 0%,#e7e6e6 45%,#ece5e5 75%,#ebe6e6 100%)"></div>
<div style="position:absolute;left:228px;top:2168.5px;width:373px;height:12px;background:#fff"></div>
<div style="position:absolute;left:218px;top:2168.5px;width:19.7px;height:20px;background:#e6e6e6;border-radius:0 9px 0 0"></div>
<div style="position:absolute;left:591px;top:2168.5px;width:19.7px;height:20px;background:#e6e6e6;border-radius:9px 0 0 0"></div>
<div style="position:absolute;left:237.7px;top:2168.5px;width:353.3px;height:63.3px;background:#fff;border-radius:0 0 9px 9px;box-shadow:0 1px 2px rgba(0,0,0,.12)"></div>
<span class="t" style="left:256.54px;top:2184.84px;font-size:32.20px;color:#242424;transform:scaleX(0.9837);-webkit-text-stroke:.5px #242424;">Vendor Ledger Entries</span>
<div style="position:absolute;left:256px;top:2221.6px;width:317px;height:4.6px;background:#107c41;border-radius:1px"></div>
<div style="position:absolute;left:600px;top:2185px;width:1.6px;height:40px;background:#c6c6c6"></div>
<div style="position:absolute;left:1835px;top:2195.5px;width:4.6px;height:4.6px;background:#3b3b3b"></div>
<div style="position:absolute;left:1835px;top:2204px;width:4.6px;height:4.6px;background:#3b3b3b"></div>
<div style="position:absolute;left:1835px;top:2212.5px;width:4.6px;height:4.6px;background:#3b3b3b"></div>
<div style="position:absolute;left:1874.6px;top:2185px;width:1131.4px;height:37.5px;background:#f5f5f5;border-radius:19px"></div>
<div style="position:absolute;left:1912px;top:2195.5px;width:241.5px;height:18px;background:#707070;border-radius:9px"></div>
<div style="position:absolute;left:0px;top:2241px;width:3836px;height:50px;background:#f5f5f5;border-top:1.5px solid #fafafa;box-sizing:border-box"></div>
<div style="position:absolute;left:0px;top:2289.5px;width:3836px;height:1.5px;background:#cfcfcf"></div>
<span class="t" style="left:21.18px;top:2255.80px;font-size:24.80px;color:#242424;transform:scaleX(0.8910);">Ready</span>
<span class="t" style="left:239.81px;top:2256.14px;font-size:24.40px;color:#242424;transform:scaleX(0.9637);font-weight:700;">Accessibility: Investigate</span>
<span class="t" style="left:2955.23px;top:2255.46px;font-size:25.20px;color:#242424;transform:scaleX(0.9498);">Display Settings</span>
<div style="position:absolute;left:3167.3px;top:2243px;width:89.5px;height:46.5px;background:#e0e0e0"></div>
<span class="t" style="left:3759.85px;top:2255.86px;font-size:24.50px;color:#242424;transform:scaleX(0.9545);">100%</span>
<svg style="position:absolute;left:0;top:0;pointer-events:none" width="3836" height="2291" fill="none"><g stroke="#9a9a9a" stroke-width="2.400" fill="none" stroke-linecap="round" stroke-linejoin="round"><path d="M54 2193.500l-12.500 9.800l12.500 9.800"/><path d="M115.500 2193.500l12.500 9.800l-12.500 9.800"/></g>
<path d="M696 2203.500h25.500M708.700 2190.700v25.500" stroke="#3b3b3b" stroke-width="2.300" stroke-linecap="round"/>
<path d="M1887.500 2204.500l12-8v16z" fill="#707070" stroke="#707070" stroke-width="2.500" stroke-linejoin="round"/><path d="M2993 2204.500l-12-8v16z" fill="#707070" stroke="#707070" stroke-width="2.500" stroke-linejoin="round"/>
<g stroke="#3b3b3b" stroke-width="2.200" fill="none" stroke-linejoin="round"><path d="M142 2281H130.500V2254.500H159.500V2266"/><path d="M130.500 2260.500H159.500"/><path d="M134.500 2266.500h6M134.500 2272h5M134.500 2277.500h6" stroke-linecap="round"/><circle cx="150.500" cy="2272.500" r="8.500"/></g><circle cx="150.500" cy="2272.500" r="4" fill="#3b3b3b"/>
<g stroke="#242424" stroke-width="2.200" fill="none" stroke-linecap="round" stroke-linejoin="round"><circle cx="214.500" cy="2256.500" r="3.300"/><path d="M202 2262c8 2.500 17 2.500 25 0"/><path d="M211 2263.500v6l-5.500 11.500M218 2263.500v6l2 4.500"/><path d="M218.500 2270.500l13 11M231.500 2270.500l-13 11"/></g>
<g stroke="#3b3b3b" stroke-width="2.200" fill="none" stroke-linejoin="miter"><path d="M2929 2273H2919.500V2254H2948.500V2260"/></g>
<g transform="translate(2939.500 2272)"><path d="M0-10l2.600 3.200l4-1.300l.9 4.100l4.100.9l-1.300 4l3.200 2.600l-3.200 2.600l1.300 4l-4.100.9l-.9 4.100l-4-1.300L0 17l-2.600-3.200l-4 1.300l-.9-4.100l-4.100-.9l1.300-4l-3.200-2.600l3.200-2.600l-1.300-4l4.100-.9l.9-4.100l4 1.300z" transform="translate(0 -3.500) scale(.78)" fill="#f5f5f5" stroke="#3b3b3b" stroke-width="2.600" stroke-linejoin="round"/><circle cx="0" cy="0" r="2.700" fill="#3b3b3b"/></g>
<g stroke="#3b3b3b" stroke-width="2.300" fill="none"><rect x="3197.700" y="2251.900" width="26.500" height="26"/><path d="M3206.500 2251.900v26M3215.400 2251.900v26M3197.700 2260.600h26.500M3197.700 2269.300h26.500"/>
<rect x="3287.500" y="2251.900" width="29" height="26"/><rect x="3293.500" y="2257" width="17" height="16"/><path d="M3297 2261.500h10M3297 2265.500h10M3297 2269.500h10" stroke-width="1.800"/>
<path d="M3377.600 2251.900h28.700v26H3377.600z"/><path d="M3386.800 2251.900v15.600M3396.500 2251.900v15.600M3377.600 2267.500h18.900"/></g>
<path d="M3449.500 2266.500h16.500M3715.500 2266.500h16.500M3723.700 2258.200v16.500" stroke="#3b3b3b" stroke-width="2"/><path d="M3480 2266.500h222" stroke="#6a6a6a" stroke-width="1.600"/><rect x="3586" y="2253.500" width="11" height="25.500" rx="2" fill="#5f5f5f"/></svg>
</body></html>
